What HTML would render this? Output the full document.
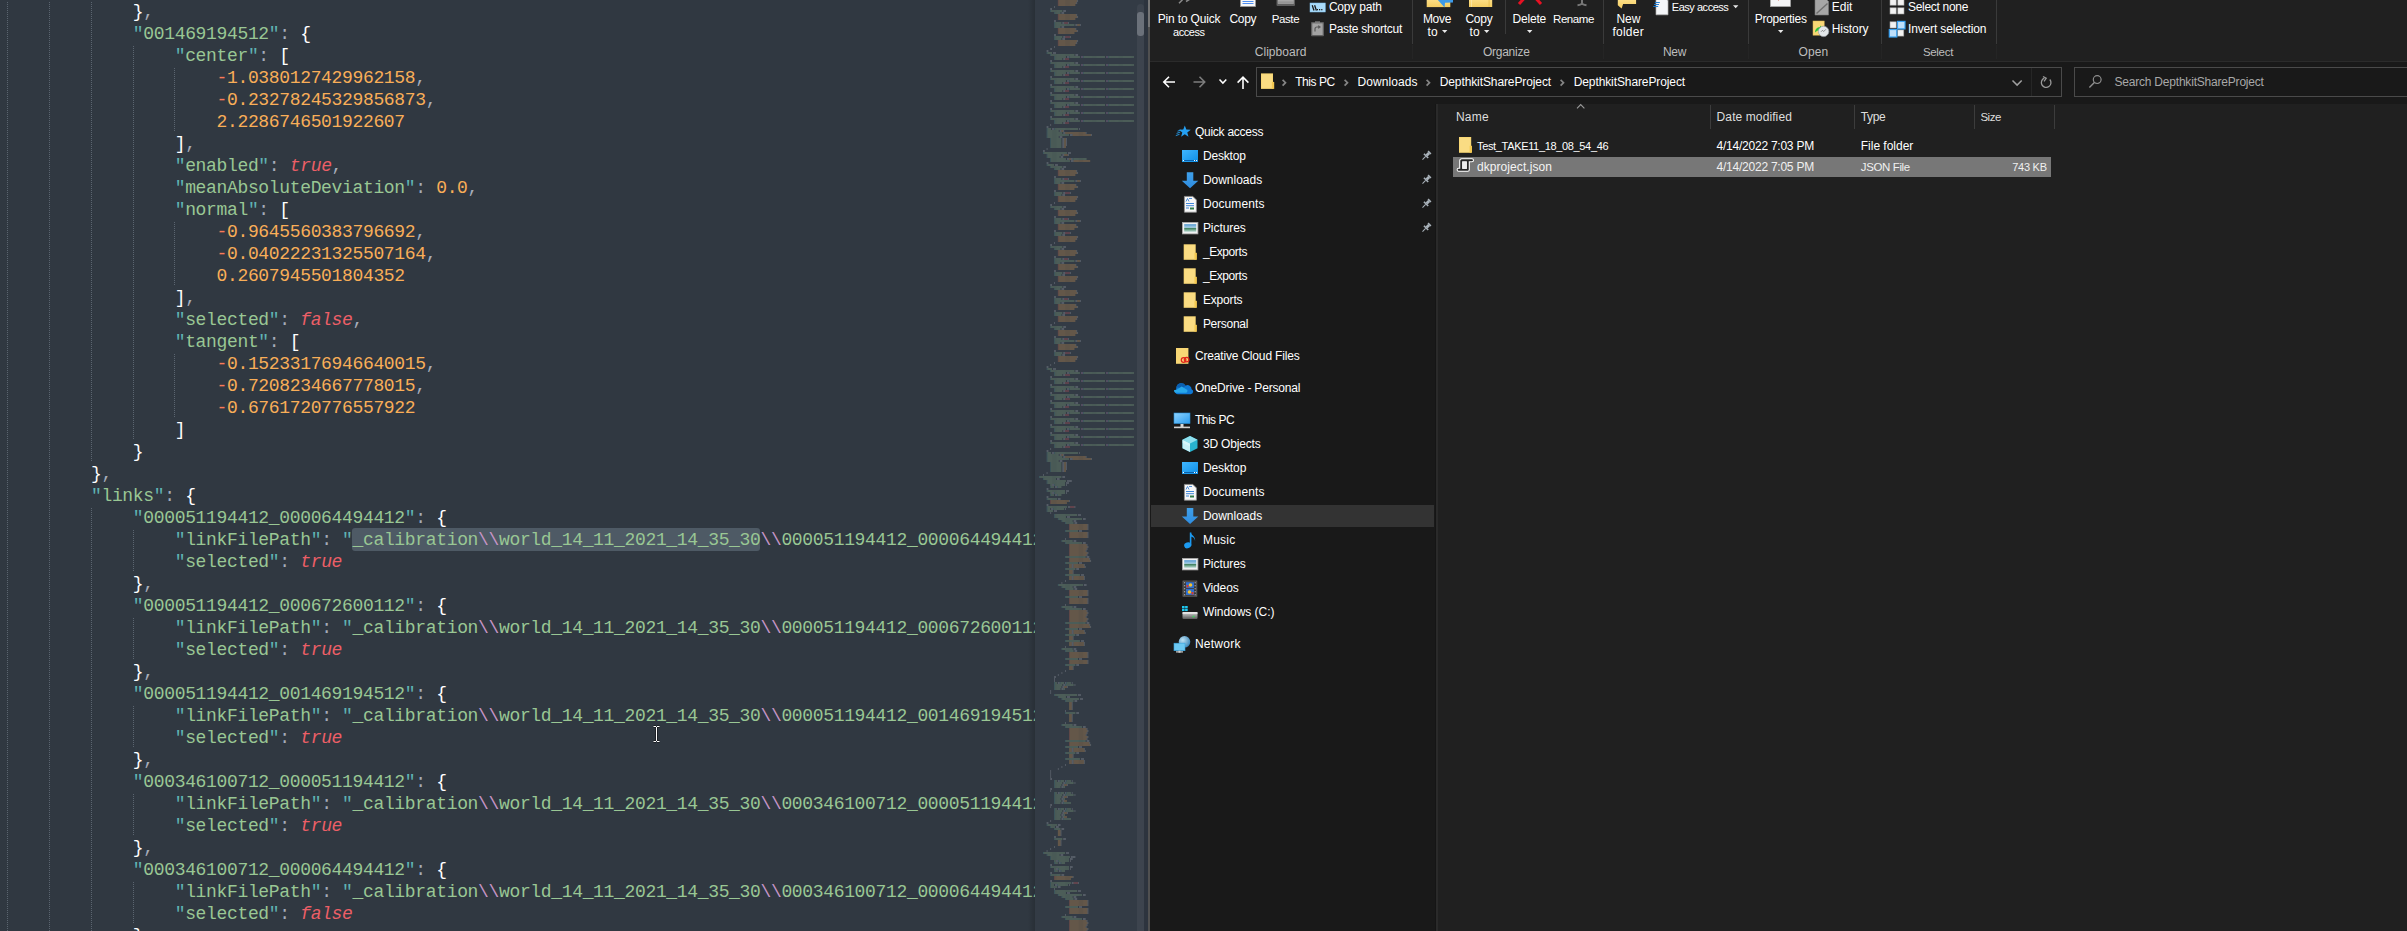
<!DOCTYPE html><html><head><meta charset="utf-8"><style>
*{margin:0;padding:0;box-sizing:border-box}
html,body{width:2407px;height:931px;overflow:hidden;background:#303841}
body{position:relative}
#ed{position:absolute;left:0;top:0;width:1035px;height:931px;background:#303841;overflow:hidden}
#code{position:absolute;left:7.3px;top:1px;font-family:"Liberation Mono",monospace;font-size:18px;letter-spacing:-0.342px;color:#fff}
.ln{position:absolute;left:0;white-space:pre;line-height:22px;height:22px}
.ln i{font-style:normal}
i.q{color:#5fb3b3} i.s{color:#99c794} i.e{color:#c594c5} i.n{color:#f9ae58} i.m{color:#f97b58}
i.c{color:#ec5f67;font-style:italic!important} i.b{color:#ffffff} i.p{color:#a6acb9}
#guides{position:absolute;left:0;top:0}
#guides line{stroke:#5b6570;stroke-width:1;stroke-dasharray:1 1}
#sel{position:absolute;left:352px;top:528px;width:408px;height:23px;background:#4e5a65;border-radius:3px}
#mm{position:absolute;left:1035px;top:0;width:113px;height:931px;background:#333b45}
#sb{position:absolute;left:1137px;top:4px;width:7px;height:927px;background:#3d444e;border-radius:4px 4px 0 0}
#th{position:absolute;left:1137px;top:12px;width:7px;height:24px;background:#6b717a;border-radius:3px}
#div{position:absolute;left:1148px;top:0;width:2px;height:931px;background:linear-gradient(#767676 0,#767676 27px,#505050 27px)}
#mmr{position:absolute;left:1144px;top:0;width:4px;height:931px;background:#2d343e}
#shad{position:absolute;left:1028px;top:0;width:7px;height:931px;background:linear-gradient(90deg,rgba(0,0,0,0),rgba(0,0,0,0.16))}
#ex{position:absolute;left:1150px;top:0;width:1257px;height:931px;background:#191919;overflow:hidden}
.t{position:absolute;white-space:pre;font-family:"Liberation Sans",sans-serif;font-size:12px;line-height:16px;color:#fff}
.abs{position:absolute}
</style></head><body>
<div id="ed">
<div id="sel"></div>
<svg id="guides" width="1035" height="931">
<line x1="7.5" y1="2" x2="7.5" y2="931"/>
<line x1="49.5" y1="2" x2="49.5" y2="931"/>
<line x1="91.5" y1="2" x2="91.5" y2="462"/>
<line x1="91.5" y1="508" x2="91.5" y2="931"/>
<line x1="133.5" y1="46" x2="133.5" y2="440"/>
<line x1="133.5" y1="530" x2="133.5" y2="572"/>
<line x1="133.5" y1="618" x2="133.5" y2="660"/>
<line x1="133.5" y1="706" x2="133.5" y2="748"/>
<line x1="133.5" y1="794" x2="133.5" y2="836"/>
<line x1="133.5" y1="882" x2="133.5" y2="924"/>
<line x1="174.5" y1="68" x2="174.5" y2="132"/>
<line x1="174.5" y1="222" x2="174.5" y2="286"/>
<line x1="174.5" y1="354" x2="174.5" y2="418"/>
</svg>
<div id="code">
<div class="ln" style="top:0px">            <i class="b">}</i><i class="p">,</i></div>
<div class="ln" style="top:22px">            <i class="q">&quot;</i><i class="s">001469194512</i><i class="q">&quot;</i><i class="p">:</i> <i class="b">{</i></div>
<div class="ln" style="top:44px">                <i class="q">&quot;</i><i class="s">center</i><i class="q">&quot;</i><i class="p">:</i> <i class="b">[</i></div>
<div class="ln" style="top:66px">                    <i class="m">-</i><i class="n">1.0380127429962158</i><i class="p">,</i></div>
<div class="ln" style="top:88px">                    <i class="m">-</i><i class="n">0.23278245329856873</i><i class="p">,</i></div>
<div class="ln" style="top:110px">                    <i class="n">2.2286746501922607</i></div>
<div class="ln" style="top:132px">                <i class="b">]</i><i class="p">,</i></div>
<div class="ln" style="top:154px">                <i class="q">&quot;</i><i class="s">enabled</i><i class="q">&quot;</i><i class="p">:</i> <i class="c">true</i><i class="p">,</i></div>
<div class="ln" style="top:176px">                <i class="q">&quot;</i><i class="s">meanAbsoluteDeviation</i><i class="q">&quot;</i><i class="p">:</i> <i class="n">0.0</i><i class="p">,</i></div>
<div class="ln" style="top:198px">                <i class="q">&quot;</i><i class="s">normal</i><i class="q">&quot;</i><i class="p">:</i> <i class="b">[</i></div>
<div class="ln" style="top:220px">                    <i class="m">-</i><i class="n">0.9645560383796692</i><i class="p">,</i></div>
<div class="ln" style="top:242px">                    <i class="m">-</i><i class="n">0.04022231325507164</i><i class="p">,</i></div>
<div class="ln" style="top:264px">                    <i class="n">0.2607945501804352</i></div>
<div class="ln" style="top:286px">                <i class="b">]</i><i class="p">,</i></div>
<div class="ln" style="top:308px">                <i class="q">&quot;</i><i class="s">selected</i><i class="q">&quot;</i><i class="p">:</i> <i class="c">false</i><i class="p">,</i></div>
<div class="ln" style="top:330px">                <i class="q">&quot;</i><i class="s">tangent</i><i class="q">&quot;</i><i class="p">:</i> <i class="b">[</i></div>
<div class="ln" style="top:352px">                    <i class="m">-</i><i class="n">0.15233176946640015</i><i class="p">,</i></div>
<div class="ln" style="top:374px">                    <i class="m">-</i><i class="n">0.7208234667778015</i><i class="p">,</i></div>
<div class="ln" style="top:396px">                    <i class="m">-</i><i class="n">0.6761720776557922</i></div>
<div class="ln" style="top:418px">                <i class="b">]</i></div>
<div class="ln" style="top:440px">            <i class="b">}</i></div>
<div class="ln" style="top:462px">        <i class="b">}</i><i class="p">,</i></div>
<div class="ln" style="top:484px">        <i class="q">&quot;</i><i class="s">links</i><i class="q">&quot;</i><i class="p">:</i> <i class="b">{</i></div>
<div class="ln" style="top:506px">            <i class="q">&quot;</i><i class="s">000051194412_000064494412</i><i class="q">&quot;</i><i class="p">:</i> <i class="b">{</i></div>
<div class="ln" style="top:528px">                <i class="q">&quot;</i><i class="s">linkFilePath</i><i class="q">&quot;</i><i class="p">:</i> <i class="q">&quot;</i><i class="s">_calibration</i><i class="e">\\</i><i class="s">world_14_11_2021_14_35_30</i><i class="e">\\</i><i class="s">000051194412_000064494412.txt</i><i class="q">&quot;</i><i class="p">,</i></div>
<div class="ln" style="top:550px">                <i class="q">&quot;</i><i class="s">selected</i><i class="q">&quot;</i><i class="p">:</i> <i class="c">true</i></div>
<div class="ln" style="top:572px">            <i class="b">}</i><i class="p">,</i></div>
<div class="ln" style="top:594px">            <i class="q">&quot;</i><i class="s">000051194412_000672600112</i><i class="q">&quot;</i><i class="p">:</i> <i class="b">{</i></div>
<div class="ln" style="top:616px">                <i class="q">&quot;</i><i class="s">linkFilePath</i><i class="q">&quot;</i><i class="p">:</i> <i class="q">&quot;</i><i class="s">_calibration</i><i class="e">\\</i><i class="s">world_14_11_2021_14_35_30</i><i class="e">\\</i><i class="s">000051194412_000672600112.txt</i><i class="q">&quot;</i><i class="p">,</i></div>
<div class="ln" style="top:638px">                <i class="q">&quot;</i><i class="s">selected</i><i class="q">&quot;</i><i class="p">:</i> <i class="c">true</i></div>
<div class="ln" style="top:660px">            <i class="b">}</i><i class="p">,</i></div>
<div class="ln" style="top:682px">            <i class="q">&quot;</i><i class="s">000051194412_001469194512</i><i class="q">&quot;</i><i class="p">:</i> <i class="b">{</i></div>
<div class="ln" style="top:704px">                <i class="q">&quot;</i><i class="s">linkFilePath</i><i class="q">&quot;</i><i class="p">:</i> <i class="q">&quot;</i><i class="s">_calibration</i><i class="e">\\</i><i class="s">world_14_11_2021_14_35_30</i><i class="e">\\</i><i class="s">000051194412_001469194512.txt</i><i class="q">&quot;</i><i class="p">,</i></div>
<div class="ln" style="top:726px">                <i class="q">&quot;</i><i class="s">selected</i><i class="q">&quot;</i><i class="p">:</i> <i class="c">true</i></div>
<div class="ln" style="top:748px">            <i class="b">}</i><i class="p">,</i></div>
<div class="ln" style="top:770px">            <i class="q">&quot;</i><i class="s">000346100712_000051194412</i><i class="q">&quot;</i><i class="p">:</i> <i class="b">{</i></div>
<div class="ln" style="top:792px">                <i class="q">&quot;</i><i class="s">linkFilePath</i><i class="q">&quot;</i><i class="p">:</i> <i class="q">&quot;</i><i class="s">_calibration</i><i class="e">\\</i><i class="s">world_14_11_2021_14_35_30</i><i class="e">\\</i><i class="s">000346100712_000051194412.txt</i><i class="q">&quot;</i><i class="p">,</i></div>
<div class="ln" style="top:814px">                <i class="q">&quot;</i><i class="s">selected</i><i class="q">&quot;</i><i class="p">:</i> <i class="c">true</i></div>
<div class="ln" style="top:836px">            <i class="b">}</i><i class="p">,</i></div>
<div class="ln" style="top:858px">            <i class="q">&quot;</i><i class="s">000346100712_000064494412</i><i class="q">&quot;</i><i class="p">:</i> <i class="b">{</i></div>
<div class="ln" style="top:880px">                <i class="q">&quot;</i><i class="s">linkFilePath</i><i class="q">&quot;</i><i class="p">:</i> <i class="q">&quot;</i><i class="s">_calibration</i><i class="e">\\</i><i class="s">world_14_11_2021_14_35_30</i><i class="e">\\</i><i class="s">000346100712_000064494412.txt</i><i class="q">&quot;</i><i class="p">,</i></div>
<div class="ln" style="top:902px">                <i class="q">&quot;</i><i class="s">selected</i><i class="q">&quot;</i><i class="p">:</i> <i class="c">false</i></div>
<div class="ln" style="top:924px">            <i class="b">}</i><i class="p">,</i></div>
</div>
<svg style="position:absolute;left:650px;top:724px" width="14" height="22"><path d="M3.5 2.5h2.5M7 2.5h2.5M6.5 3v14M3.5 17.5h2.5M7 17.5h2.5" stroke="#000" stroke-width="2.4" opacity="0.55"/><path d="M3.5 2.5h2.5M7 2.5h2.5M6.5 3v14M3.5 17.5h2.5M7 17.5h2.5" stroke="#fff" stroke-width="1"/></svg>
<div id="shad"></div>
</div>
<div id="mm"></div>
<svg id="mmsvg" width="2407" height="931" style="position:absolute;left:0;top:0"><g opacity="0.72" stroke-dasharray="0.62 0.31" stroke-width="1.2"><path d="M1057.90 1.0h0.93" stroke="#f97b58"/><path d="M1058.83 1.0h18.60" stroke="#f9ae58"/><path d="M1077.43 1.0h0.93" stroke="#c0c5ce"/><path d="M1057.90 3.0h0.93" stroke="#f97b58"/><path d="M1058.83 3.0h17.67" stroke="#f9ae58"/><path d="M1076.50 3.0h0.93" stroke="#c0c5ce"/><path d="M1057.90 5.0h0.93" stroke="#f97b58"/><path d="M1058.83 5.0h16.74" stroke="#f9ae58"/><path d="M1054.18 7.0h0.93" stroke="#c0c5ce"/><path d="M1050.46 9.0h1.86" stroke="#c0c5ce"/><path d="M1050.46 11.0h0.93" stroke="#5fb3b3"/><path d="M1051.39 11.0h11.16" stroke="#99c794"/><path d="M1063.48 11.0h2.79" stroke="#c0c5ce"/><path d="M1054.18 13.0h0.93" stroke="#5fb3b3"/><path d="M1055.11 13.0h5.58" stroke="#99c794"/><path d="M1061.62 13.0h2.79" stroke="#c0c5ce"/><path d="M1057.90 15.0h0.93" stroke="#f97b58"/><path d="M1058.83 15.0h17.67" stroke="#f9ae58"/><path d="M1076.50 15.0h0.93" stroke="#c0c5ce"/><path d="M1057.90 17.0h0.93" stroke="#f97b58"/><path d="M1058.83 17.0h18.60" stroke="#f9ae58"/><path d="M1077.43 17.0h0.93" stroke="#c0c5ce"/><path d="M1057.90 19.0h0.93" stroke="#f97b58"/><path d="M1058.83 19.0h16.74" stroke="#f9ae58"/><path d="M1054.18 21.0h1.86" stroke="#c0c5ce"/><path d="M1054.18 23.0h0.93" stroke="#5fb3b3"/><path d="M1055.11 23.0h6.51" stroke="#99c794"/><path d="M1062.55 23.0h1.86" stroke="#c0c5ce"/><path d="M1064.41 23.0h3.72" stroke="#ec5f67"/><path d="M1068.13 23.0h0.93" stroke="#c0c5ce"/><path d="M1054.18 25.0h0.93" stroke="#5fb3b3"/><path d="M1055.11 25.0h19.53" stroke="#99c794"/><path d="M1075.57 25.0h1.86" stroke="#c0c5ce"/><path d="M1077.43 25.0h2.79" stroke="#f9ae58"/><path d="M1080.22 25.0h0.93" stroke="#c0c5ce"/><path d="M1054.18 27.0h0.93" stroke="#5fb3b3"/><path d="M1055.11 27.0h5.58" stroke="#99c794"/><path d="M1061.62 27.0h2.79" stroke="#c0c5ce"/><path d="M1057.90 29.0h0.93" stroke="#f97b58"/><path d="M1058.83 29.0h16.74" stroke="#f9ae58"/><path d="M1075.57 29.0h0.93" stroke="#c0c5ce"/><path d="M1057.90 31.0h0.93" stroke="#f97b58"/><path d="M1058.83 31.0h18.60" stroke="#f9ae58"/><path d="M1077.43 31.0h0.93" stroke="#c0c5ce"/><path d="M1057.90 33.0h0.93" stroke="#f97b58"/><path d="M1058.83 33.0h15.81" stroke="#f9ae58"/><path d="M1054.18 35.0h1.86" stroke="#c0c5ce"/><path d="M1054.18 37.0h0.93" stroke="#5fb3b3"/><path d="M1055.11 37.0h7.44" stroke="#99c794"/><path d="M1063.48 37.0h1.86" stroke="#c0c5ce"/><path d="M1065.34 37.0h4.65" stroke="#ec5f67"/><path d="M1069.99 37.0h0.93" stroke="#c0c5ce"/><path d="M1054.18 39.0h0.93" stroke="#5fb3b3"/><path d="M1055.11 39.0h6.51" stroke="#99c794"/><path d="M1062.55 39.0h2.79" stroke="#c0c5ce"/><path d="M1057.90 41.0h0.93" stroke="#f97b58"/><path d="M1058.83 41.0h18.60" stroke="#f9ae58"/><path d="M1077.43 41.0h0.93" stroke="#c0c5ce"/><path d="M1057.90 43.0h0.93" stroke="#f97b58"/><path d="M1058.83 43.0h17.67" stroke="#f9ae58"/><path d="M1076.50 43.0h0.93" stroke="#c0c5ce"/><path d="M1057.90 45.0h0.93" stroke="#f97b58"/><path d="M1058.83 45.0h16.74" stroke="#f9ae58"/><path d="M1054.18 47.0h0.93" stroke="#c0c5ce"/><path d="M1050.46 49.0h1.86" stroke="#c0c5ce"/><path d="M1046.74 51.0h1.86" stroke="#c0c5ce"/><path d="M1046.74 53.0h0.93" stroke="#5fb3b3"/><path d="M1047.67 53.0h4.65" stroke="#99c794"/><path d="M1053.25 53.0h2.79" stroke="#c0c5ce"/><path d="M1050.46 55.0h0.93" stroke="#5fb3b3"/><path d="M1051.39 55.0h23.25" stroke="#99c794"/><path d="M1075.57 55.0h2.79" stroke="#c0c5ce"/><path d="M1054.18 57.0h0.93" stroke="#5fb3b3"/><path d="M1055.11 57.0h11.16" stroke="#99c794"/><path d="M1067.20 57.0h1.86" stroke="#c0c5ce"/><path d="M1069.06 57.0h0.93" stroke="#5fb3b3"/><path d="M1069.99 57.0h10.23" stroke="#99c794"/><path d="M1081.15 57.0h1.86" stroke="#c594c5"/><path d="M1083.01 57.0h0.93" stroke="#5fb3b3"/><path d="M1083.94 57.0h21.39" stroke="#99c794"/><path d="M1106.26 57.0h1.86" stroke="#c594c5"/><path d="M1108.12 57.0h0.93" stroke="#5fb3b3"/><path d="M1109.05 57.0h24.95" stroke="#99c794"/><path d="M1054.18 59.0h0.93" stroke="#5fb3b3"/><path d="M1055.11 59.0h7.44" stroke="#99c794"/><path d="M1063.48 59.0h1.86" stroke="#c0c5ce"/><path d="M1065.34 59.0h3.72" stroke="#ec5f67"/><path d="M1050.46 61.0h1.86" stroke="#c0c5ce"/><path d="M1050.46 63.0h0.93" stroke="#5fb3b3"/><path d="M1051.39 63.0h23.25" stroke="#99c794"/><path d="M1075.57 63.0h2.79" stroke="#c0c5ce"/><path d="M1054.18 65.0h0.93" stroke="#5fb3b3"/><path d="M1055.11 65.0h11.16" stroke="#99c794"/><path d="M1067.20 65.0h1.86" stroke="#c0c5ce"/><path d="M1069.06 65.0h0.93" stroke="#5fb3b3"/><path d="M1069.99 65.0h10.23" stroke="#99c794"/><path d="M1081.15 65.0h1.86" stroke="#c594c5"/><path d="M1083.01 65.0h0.93" stroke="#5fb3b3"/><path d="M1083.94 65.0h21.39" stroke="#99c794"/><path d="M1106.26 65.0h1.86" stroke="#c594c5"/><path d="M1108.12 65.0h0.93" stroke="#5fb3b3"/><path d="M1109.05 65.0h24.95" stroke="#99c794"/><path d="M1054.18 67.0h0.93" stroke="#5fb3b3"/><path d="M1055.11 67.0h7.44" stroke="#99c794"/><path d="M1063.48 67.0h1.86" stroke="#c0c5ce"/><path d="M1065.34 67.0h3.72" stroke="#ec5f67"/><path d="M1050.46 69.0h1.86" stroke="#c0c5ce"/><path d="M1050.46 71.0h0.93" stroke="#5fb3b3"/><path d="M1051.39 71.0h23.25" stroke="#99c794"/><path d="M1075.57 71.0h2.79" stroke="#c0c5ce"/><path d="M1054.18 73.0h0.93" stroke="#5fb3b3"/><path d="M1055.11 73.0h11.16" stroke="#99c794"/><path d="M1067.20 73.0h1.86" stroke="#c0c5ce"/><path d="M1069.06 73.0h0.93" stroke="#5fb3b3"/><path d="M1069.99 73.0h10.23" stroke="#99c794"/><path d="M1081.15 73.0h1.86" stroke="#c594c5"/><path d="M1083.01 73.0h0.93" stroke="#5fb3b3"/><path d="M1083.94 73.0h21.39" stroke="#99c794"/><path d="M1106.26 73.0h1.86" stroke="#c594c5"/><path d="M1108.12 73.0h0.93" stroke="#5fb3b3"/><path d="M1109.05 73.0h24.95" stroke="#99c794"/><path d="M1054.18 75.0h0.93" stroke="#5fb3b3"/><path d="M1055.11 75.0h7.44" stroke="#99c794"/><path d="M1063.48 75.0h1.86" stroke="#c0c5ce"/><path d="M1065.34 75.0h3.72" stroke="#ec5f67"/><path d="M1050.46 77.0h1.86" stroke="#c0c5ce"/><path d="M1050.46 79.0h0.93" stroke="#5fb3b3"/><path d="M1051.39 79.0h23.25" stroke="#99c794"/><path d="M1075.57 79.0h2.79" stroke="#c0c5ce"/><path d="M1054.18 81.0h0.93" stroke="#5fb3b3"/><path d="M1055.11 81.0h11.16" stroke="#99c794"/><path d="M1067.20 81.0h1.86" stroke="#c0c5ce"/><path d="M1069.06 81.0h0.93" stroke="#5fb3b3"/><path d="M1069.99 81.0h10.23" stroke="#99c794"/><path d="M1081.15 81.0h1.86" stroke="#c594c5"/><path d="M1083.01 81.0h0.93" stroke="#5fb3b3"/><path d="M1083.94 81.0h21.39" stroke="#99c794"/><path d="M1106.26 81.0h1.86" stroke="#c594c5"/><path d="M1108.12 81.0h0.93" stroke="#5fb3b3"/><path d="M1109.05 81.0h24.95" stroke="#99c794"/><path d="M1054.18 83.0h0.93" stroke="#5fb3b3"/><path d="M1055.11 83.0h7.44" stroke="#99c794"/><path d="M1063.48 83.0h1.86" stroke="#c0c5ce"/><path d="M1065.34 83.0h3.72" stroke="#ec5f67"/><path d="M1050.46 85.0h1.86" stroke="#c0c5ce"/><path d="M1050.46 87.0h0.93" stroke="#5fb3b3"/><path d="M1051.39 87.0h23.25" stroke="#99c794"/><path d="M1075.57 87.0h2.79" stroke="#c0c5ce"/><path d="M1054.18 89.0h0.93" stroke="#5fb3b3"/><path d="M1055.11 89.0h11.16" stroke="#99c794"/><path d="M1067.20 89.0h1.86" stroke="#c0c5ce"/><path d="M1069.06 89.0h0.93" stroke="#5fb3b3"/><path d="M1069.99 89.0h10.23" stroke="#99c794"/><path d="M1081.15 89.0h1.86" stroke="#c594c5"/><path d="M1083.01 89.0h0.93" stroke="#5fb3b3"/><path d="M1083.94 89.0h21.39" stroke="#99c794"/><path d="M1106.26 89.0h1.86" stroke="#c594c5"/><path d="M1108.12 89.0h0.93" stroke="#5fb3b3"/><path d="M1109.05 89.0h24.95" stroke="#99c794"/><path d="M1054.18 91.0h0.93" stroke="#5fb3b3"/><path d="M1055.11 91.0h7.44" stroke="#99c794"/><path d="M1063.48 91.0h1.86" stroke="#c0c5ce"/><path d="M1065.34 91.0h3.72" stroke="#ec5f67"/><path d="M1050.46 93.0h1.86" stroke="#c0c5ce"/><path d="M1050.46 95.0h0.93" stroke="#5fb3b3"/><path d="M1051.39 95.0h23.25" stroke="#99c794"/><path d="M1075.57 95.0h2.79" stroke="#c0c5ce"/><path d="M1054.18 97.0h0.93" stroke="#5fb3b3"/><path d="M1055.11 97.0h11.16" stroke="#99c794"/><path d="M1067.20 97.0h1.86" stroke="#c0c5ce"/><path d="M1069.06 97.0h0.93" stroke="#5fb3b3"/><path d="M1069.99 97.0h10.23" stroke="#99c794"/><path d="M1081.15 97.0h1.86" stroke="#c594c5"/><path d="M1083.01 97.0h0.93" stroke="#5fb3b3"/><path d="M1083.94 97.0h21.39" stroke="#99c794"/><path d="M1106.26 97.0h1.86" stroke="#c594c5"/><path d="M1108.12 97.0h0.93" stroke="#5fb3b3"/><path d="M1109.05 97.0h24.95" stroke="#99c794"/><path d="M1054.18 99.0h0.93" stroke="#5fb3b3"/><path d="M1055.11 99.0h7.44" stroke="#99c794"/><path d="M1063.48 99.0h1.86" stroke="#c0c5ce"/><path d="M1065.34 99.0h3.72" stroke="#ec5f67"/><path d="M1050.46 101.0h1.86" stroke="#c0c5ce"/><path d="M1050.46 103.0h0.93" stroke="#5fb3b3"/><path d="M1051.39 103.0h23.25" stroke="#99c794"/><path d="M1075.57 103.0h2.79" stroke="#c0c5ce"/><path d="M1054.18 105.0h0.93" stroke="#5fb3b3"/><path d="M1055.11 105.0h11.16" stroke="#99c794"/><path d="M1067.20 105.0h1.86" stroke="#c0c5ce"/><path d="M1069.06 105.0h0.93" stroke="#5fb3b3"/><path d="M1069.99 105.0h10.23" stroke="#99c794"/><path d="M1081.15 105.0h1.86" stroke="#c594c5"/><path d="M1083.01 105.0h0.93" stroke="#5fb3b3"/><path d="M1083.94 105.0h21.39" stroke="#99c794"/><path d="M1106.26 105.0h1.86" stroke="#c594c5"/><path d="M1108.12 105.0h0.93" stroke="#5fb3b3"/><path d="M1109.05 105.0h24.95" stroke="#99c794"/><path d="M1054.18 107.0h0.93" stroke="#5fb3b3"/><path d="M1055.11 107.0h7.44" stroke="#99c794"/><path d="M1063.48 107.0h1.86" stroke="#c0c5ce"/><path d="M1065.34 107.0h3.72" stroke="#ec5f67"/><path d="M1050.46 109.0h1.86" stroke="#c0c5ce"/><path d="M1050.46 111.0h0.93" stroke="#5fb3b3"/><path d="M1051.39 111.0h23.25" stroke="#99c794"/><path d="M1075.57 111.0h2.79" stroke="#c0c5ce"/><path d="M1054.18 113.0h0.93" stroke="#5fb3b3"/><path d="M1055.11 113.0h11.16" stroke="#99c794"/><path d="M1067.20 113.0h1.86" stroke="#c0c5ce"/><path d="M1069.06 113.0h0.93" stroke="#5fb3b3"/><path d="M1069.99 113.0h10.23" stroke="#99c794"/><path d="M1081.15 113.0h1.86" stroke="#c594c5"/><path d="M1083.01 113.0h0.93" stroke="#5fb3b3"/><path d="M1083.94 113.0h21.39" stroke="#99c794"/><path d="M1106.26 113.0h1.86" stroke="#c594c5"/><path d="M1108.12 113.0h0.93" stroke="#5fb3b3"/><path d="M1109.05 113.0h24.95" stroke="#99c794"/><path d="M1054.18 115.0h0.93" stroke="#5fb3b3"/><path d="M1055.11 115.0h7.44" stroke="#99c794"/><path d="M1063.48 115.0h1.86" stroke="#c0c5ce"/><path d="M1065.34 115.0h3.72" stroke="#ec5f67"/><path d="M1050.46 117.0h1.86" stroke="#c0c5ce"/><path d="M1050.46 119.0h0.93" stroke="#5fb3b3"/><path d="M1051.39 119.0h23.25" stroke="#99c794"/><path d="M1075.57 119.0h2.79" stroke="#c0c5ce"/><path d="M1054.18 121.0h0.93" stroke="#5fb3b3"/><path d="M1055.11 121.0h11.16" stroke="#99c794"/><path d="M1067.20 121.0h1.86" stroke="#c0c5ce"/><path d="M1069.06 121.0h0.93" stroke="#5fb3b3"/><path d="M1069.99 121.0h10.23" stroke="#99c794"/><path d="M1081.15 121.0h1.86" stroke="#c594c5"/><path d="M1083.01 121.0h0.93" stroke="#5fb3b3"/><path d="M1083.94 121.0h21.39" stroke="#99c794"/><path d="M1106.26 121.0h1.86" stroke="#c594c5"/><path d="M1108.12 121.0h0.93" stroke="#5fb3b3"/><path d="M1109.05 121.0h24.95" stroke="#99c794"/><path d="M1054.18 123.0h0.93" stroke="#5fb3b3"/><path d="M1055.11 123.0h7.44" stroke="#99c794"/><path d="M1063.48 123.0h1.86" stroke="#c0c5ce"/><path d="M1065.34 123.0h3.72" stroke="#ec5f67"/><path d="M1050.46 125.0h0.93" stroke="#c0c5ce"/><path d="M1046.74 127.0h1.86" stroke="#c0c5ce"/><path d="M1046.74 129.0h0.93" stroke="#5fb3b3"/><path d="M1047.67 129.0h3.72" stroke="#99c794"/><path d="M1052.32 129.0h1.86" stroke="#c0c5ce"/><path d="M1054.18 129.0h0.93" stroke="#5fb3b3"/><path d="M1055.11 129.0h23.25" stroke="#99c794"/><path d="M1079.29 129.0h0.93" stroke="#c0c5ce"/><path d="M1046.74 131.0h0.93" stroke="#5fb3b3"/><path d="M1047.67 131.0h11.16" stroke="#99c794"/><path d="M1059.76 131.0h1.86" stroke="#c0c5ce"/><path d="M1061.62 131.0h1.86" stroke="#f9ae58"/><path d="M1063.48 131.0h0.93" stroke="#c0c5ce"/><path d="M1046.74 133.0h0.93" stroke="#5fb3b3"/><path d="M1047.67 133.0h14.88" stroke="#99c794"/><path d="M1063.48 133.0h1.86" stroke="#c0c5ce"/><path d="M1065.34 133.0h20.46" stroke="#f9ae58"/><path d="M1085.80 133.0h0.93" stroke="#c0c5ce"/><path d="M1046.74 135.0h0.93" stroke="#5fb3b3"/><path d="M1047.67 135.0h21.39" stroke="#99c794"/><path d="M1069.99 135.0h2.79" stroke="#c0c5ce"/><path d="M1072.78 135.0h18.60" stroke="#f9ae58"/><path d="M1091.38 135.0h0.93" stroke="#c0c5ce"/><path d="M1046.74 137.0h0.93" stroke="#5fb3b3"/><path d="M1047.67 137.0h11.16" stroke="#99c794"/><path d="M1059.76 137.0h2.79" stroke="#c0c5ce"/><path d="M1050.46 139.0h0.93" stroke="#5fb3b3"/><path d="M1051.39 139.0h10.23" stroke="#99c794"/><path d="M1062.55 139.0h1.86" stroke="#c0c5ce"/><path d="M1064.41 139.0h1.86" stroke="#f9ae58"/><path d="M1066.27 139.0h0.93" stroke="#c0c5ce"/><path d="M1050.46 141.0h0.93" stroke="#5fb3b3"/><path d="M1051.39 141.0h10.23" stroke="#99c794"/><path d="M1062.55 141.0h1.86" stroke="#c0c5ce"/><path d="M1064.41 141.0h1.86" stroke="#f9ae58"/><path d="M1066.27 141.0h0.93" stroke="#c0c5ce"/><path d="M1050.46 143.0h0.93" stroke="#5fb3b3"/><path d="M1051.39 143.0h10.23" stroke="#99c794"/><path d="M1062.55 143.0h1.86" stroke="#c0c5ce"/><path d="M1064.41 143.0h1.86" stroke="#f9ae58"/><path d="M1066.27 143.0h0.93" stroke="#c0c5ce"/><path d="M1050.46 145.0h0.93" stroke="#5fb3b3"/><path d="M1051.39 145.0h10.23" stroke="#99c794"/><path d="M1062.55 145.0h1.86" stroke="#c0c5ce"/><path d="M1064.41 145.0h1.86" stroke="#f9ae58"/><path d="M1066.27 145.0h0.93" stroke="#c0c5ce"/><path d="M1050.46 147.0h0.93" stroke="#5fb3b3"/><path d="M1051.39 147.0h10.23" stroke="#99c794"/><path d="M1062.55 147.0h1.86" stroke="#c0c5ce"/><path d="M1064.41 147.0h1.86" stroke="#f9ae58"/><path d="M1046.74 149.0h0.93" stroke="#c0c5ce"/><path d="M1043.02 151.0h1.86" stroke="#c0c5ce"/><path d="M1043.02 153.0h0.93" stroke="#5fb3b3"/><path d="M1043.95 153.0h23.25" stroke="#99c794"/><path d="M1068.13 153.0h2.79" stroke="#c0c5ce"/><path d="M1046.74 155.0h0.93" stroke="#5fb3b3"/><path d="M1047.67 155.0h13.95" stroke="#99c794"/><path d="M1062.55 155.0h1.86" stroke="#c0c5ce"/><path d="M1064.41 155.0h3.72" stroke="#f9ae58"/><path d="M1068.13 155.0h0.93" stroke="#c0c5ce"/><path d="M1046.74 157.0h0.93" stroke="#5fb3b3"/><path d="M1047.67 157.0h12.09" stroke="#99c794"/><path d="M1060.69 157.0h2.79" stroke="#c0c5ce"/><path d="M1050.46 159.0h0.93" stroke="#5fb3b3"/><path d="M1051.39 159.0h14.88" stroke="#99c794"/><path d="M1067.20 159.0h1.86" stroke="#c0c5ce"/><path d="M1069.06 159.0h1.86" stroke="#f9ae58"/><path d="M1070.92 159.0h1.86" stroke="#c0c5ce"/><path d="M1072.78 159.0h0.93" stroke="#5fb3b3"/><path d="M1073.71 159.0h13.02" stroke="#99c794"/><path d="M1050.46 161.0h0.93" stroke="#5fb3b3"/><path d="M1051.39 161.0h18.60" stroke="#99c794"/><path d="M1070.92 161.0h2.79" stroke="#c0c5ce"/><path d="M1073.71 161.0h16.74" stroke="#f9ae58"/><path d="M1046.74 163.0h1.86" stroke="#c0c5ce"/><path d="M1046.74 165.0h0.93" stroke="#5fb3b3"/><path d="M1047.67 165.0h6.51" stroke="#99c794"/><path d="M1055.11 165.0h2.79" stroke="#c0c5ce"/><path d="M1050.46 167.0h0.93" stroke="#5fb3b3"/><path d="M1051.39 167.0h11.16" stroke="#99c794"/><path d="M1063.48 167.0h2.79" stroke="#c0c5ce"/><path d="M1054.18 169.0h0.93" stroke="#5fb3b3"/><path d="M1055.11 169.0h5.58" stroke="#99c794"/><path d="M1061.62 169.0h2.79" stroke="#c0c5ce"/><path d="M1057.90 171.0h0.93" stroke="#f97b58"/><path d="M1058.83 171.0h17.67" stroke="#f9ae58"/><path d="M1076.50 171.0h0.93" stroke="#c0c5ce"/><path d="M1057.90 173.0h0.93" stroke="#f97b58"/><path d="M1058.83 173.0h18.60" stroke="#f9ae58"/><path d="M1077.43 173.0h0.93" stroke="#c0c5ce"/><path d="M1057.90 175.0h0.93" stroke="#f97b58"/><path d="M1058.83 175.0h16.74" stroke="#f9ae58"/><path d="M1054.18 177.0h1.86" stroke="#c0c5ce"/><path d="M1054.18 179.0h0.93" stroke="#5fb3b3"/><path d="M1055.11 179.0h6.51" stroke="#99c794"/><path d="M1062.55 179.0h1.86" stroke="#c0c5ce"/><path d="M1064.41 179.0h3.72" stroke="#ec5f67"/><path d="M1068.13 179.0h0.93" stroke="#c0c5ce"/><path d="M1054.18 181.0h0.93" stroke="#5fb3b3"/><path d="M1055.11 181.0h19.53" stroke="#99c794"/><path d="M1075.57 181.0h1.86" stroke="#c0c5ce"/><path d="M1077.43 181.0h2.79" stroke="#f9ae58"/><path d="M1080.22 181.0h0.93" stroke="#c0c5ce"/><path d="M1054.18 183.0h0.93" stroke="#5fb3b3"/><path d="M1055.11 183.0h5.58" stroke="#99c794"/><path d="M1061.62 183.0h2.79" stroke="#c0c5ce"/><path d="M1057.90 185.0h0.93" stroke="#f97b58"/><path d="M1058.83 185.0h16.74" stroke="#f9ae58"/><path d="M1075.57 185.0h0.93" stroke="#c0c5ce"/><path d="M1057.90 187.0h0.93" stroke="#f97b58"/><path d="M1058.83 187.0h18.60" stroke="#f9ae58"/><path d="M1077.43 187.0h0.93" stroke="#c0c5ce"/><path d="M1057.90 189.0h0.93" stroke="#f97b58"/><path d="M1058.83 189.0h15.81" stroke="#f9ae58"/><path d="M1054.18 191.0h1.86" stroke="#c0c5ce"/><path d="M1054.18 193.0h0.93" stroke="#5fb3b3"/><path d="M1055.11 193.0h7.44" stroke="#99c794"/><path d="M1063.48 193.0h1.86" stroke="#c0c5ce"/><path d="M1065.34 193.0h4.65" stroke="#ec5f67"/><path d="M1069.99 193.0h0.93" stroke="#c0c5ce"/><path d="M1054.18 195.0h0.93" stroke="#5fb3b3"/><path d="M1055.11 195.0h6.51" stroke="#99c794"/><path d="M1062.55 195.0h2.79" stroke="#c0c5ce"/><path d="M1057.90 197.0h0.93" stroke="#f97b58"/><path d="M1058.83 197.0h18.60" stroke="#f9ae58"/><path d="M1077.43 197.0h0.93" stroke="#c0c5ce"/><path d="M1057.90 199.0h0.93" stroke="#f97b58"/><path d="M1058.83 199.0h17.67" stroke="#f9ae58"/><path d="M1076.50 199.0h0.93" stroke="#c0c5ce"/><path d="M1057.90 201.0h0.93" stroke="#f97b58"/><path d="M1058.83 201.0h16.74" stroke="#f9ae58"/><path d="M1054.18 203.0h0.93" stroke="#c0c5ce"/><path d="M1050.46 205.0h1.86" stroke="#c0c5ce"/><path d="M1050.46 207.0h0.93" stroke="#5fb3b3"/><path d="M1051.39 207.0h11.16" stroke="#99c794"/><path d="M1063.48 207.0h2.79" stroke="#c0c5ce"/><path d="M1054.18 209.0h0.93" stroke="#5fb3b3"/><path d="M1055.11 209.0h5.58" stroke="#99c794"/><path d="M1061.62 209.0h2.79" stroke="#c0c5ce"/><path d="M1057.90 211.0h0.93" stroke="#f97b58"/><path d="M1058.83 211.0h17.67" stroke="#f9ae58"/><path d="M1076.50 211.0h0.93" stroke="#c0c5ce"/><path d="M1057.90 213.0h0.93" stroke="#f97b58"/><path d="M1058.83 213.0h18.60" stroke="#f9ae58"/><path d="M1077.43 213.0h0.93" stroke="#c0c5ce"/><path d="M1057.90 215.0h0.93" stroke="#f97b58"/><path d="M1058.83 215.0h16.74" stroke="#f9ae58"/><path d="M1054.18 217.0h1.86" stroke="#c0c5ce"/><path d="M1054.18 219.0h0.93" stroke="#5fb3b3"/><path d="M1055.11 219.0h6.51" stroke="#99c794"/><path d="M1062.55 219.0h1.86" stroke="#c0c5ce"/><path d="M1064.41 219.0h3.72" stroke="#ec5f67"/><path d="M1068.13 219.0h0.93" stroke="#c0c5ce"/><path d="M1054.18 221.0h0.93" stroke="#5fb3b3"/><path d="M1055.11 221.0h19.53" stroke="#99c794"/><path d="M1075.57 221.0h1.86" stroke="#c0c5ce"/><path d="M1077.43 221.0h2.79" stroke="#f9ae58"/><path d="M1080.22 221.0h0.93" stroke="#c0c5ce"/><path d="M1054.18 223.0h0.93" stroke="#5fb3b3"/><path d="M1055.11 223.0h5.58" stroke="#99c794"/><path d="M1061.62 223.0h2.79" stroke="#c0c5ce"/><path d="M1057.90 225.0h0.93" stroke="#f97b58"/><path d="M1058.83 225.0h16.74" stroke="#f9ae58"/><path d="M1075.57 225.0h0.93" stroke="#c0c5ce"/><path d="M1057.90 227.0h0.93" stroke="#f97b58"/><path d="M1058.83 227.0h18.60" stroke="#f9ae58"/><path d="M1077.43 227.0h0.93" stroke="#c0c5ce"/><path d="M1057.90 229.0h0.93" stroke="#f97b58"/><path d="M1058.83 229.0h15.81" stroke="#f9ae58"/><path d="M1054.18 231.0h1.86" stroke="#c0c5ce"/><path d="M1054.18 233.0h0.93" stroke="#5fb3b3"/><path d="M1055.11 233.0h7.44" stroke="#99c794"/><path d="M1063.48 233.0h1.86" stroke="#c0c5ce"/><path d="M1065.34 233.0h4.65" stroke="#ec5f67"/><path d="M1069.99 233.0h0.93" stroke="#c0c5ce"/><path d="M1054.18 235.0h0.93" stroke="#5fb3b3"/><path d="M1055.11 235.0h6.51" stroke="#99c794"/><path d="M1062.55 235.0h2.79" stroke="#c0c5ce"/><path d="M1057.90 237.0h0.93" stroke="#f97b58"/><path d="M1058.83 237.0h18.60" stroke="#f9ae58"/><path d="M1077.43 237.0h0.93" stroke="#c0c5ce"/><path d="M1057.90 239.0h0.93" stroke="#f97b58"/><path d="M1058.83 239.0h17.67" stroke="#f9ae58"/><path d="M1076.50 239.0h0.93" stroke="#c0c5ce"/><path d="M1057.90 241.0h0.93" stroke="#f97b58"/><path d="M1058.83 241.0h16.74" stroke="#f9ae58"/><path d="M1054.18 243.0h0.93" stroke="#c0c5ce"/><path d="M1050.46 245.0h1.86" stroke="#c0c5ce"/><path d="M1050.46 247.0h0.93" stroke="#5fb3b3"/><path d="M1051.39 247.0h11.16" stroke="#99c794"/><path d="M1063.48 247.0h2.79" stroke="#c0c5ce"/><path d="M1054.18 249.0h0.93" stroke="#5fb3b3"/><path d="M1055.11 249.0h5.58" stroke="#99c794"/><path d="M1061.62 249.0h2.79" stroke="#c0c5ce"/><path d="M1057.90 251.0h0.93" stroke="#f97b58"/><path d="M1058.83 251.0h17.67" stroke="#f9ae58"/><path d="M1076.50 251.0h0.93" stroke="#c0c5ce"/><path d="M1057.90 253.0h0.93" stroke="#f97b58"/><path d="M1058.83 253.0h18.60" stroke="#f9ae58"/><path d="M1077.43 253.0h0.93" stroke="#c0c5ce"/><path d="M1057.90 255.0h0.93" stroke="#f97b58"/><path d="M1058.83 255.0h16.74" stroke="#f9ae58"/><path d="M1054.18 257.0h1.86" stroke="#c0c5ce"/><path d="M1054.18 259.0h0.93" stroke="#5fb3b3"/><path d="M1055.11 259.0h6.51" stroke="#99c794"/><path d="M1062.55 259.0h1.86" stroke="#c0c5ce"/><path d="M1064.41 259.0h3.72" stroke="#ec5f67"/><path d="M1068.13 259.0h0.93" stroke="#c0c5ce"/><path d="M1054.18 261.0h0.93" stroke="#5fb3b3"/><path d="M1055.11 261.0h19.53" stroke="#99c794"/><path d="M1075.57 261.0h1.86" stroke="#c0c5ce"/><path d="M1077.43 261.0h2.79" stroke="#f9ae58"/><path d="M1080.22 261.0h0.93" stroke="#c0c5ce"/><path d="M1054.18 263.0h0.93" stroke="#5fb3b3"/><path d="M1055.11 263.0h5.58" stroke="#99c794"/><path d="M1061.62 263.0h2.79" stroke="#c0c5ce"/><path d="M1057.90 265.0h0.93" stroke="#f97b58"/><path d="M1058.83 265.0h16.74" stroke="#f9ae58"/><path d="M1075.57 265.0h0.93" stroke="#c0c5ce"/><path d="M1057.90 267.0h0.93" stroke="#f97b58"/><path d="M1058.83 267.0h18.60" stroke="#f9ae58"/><path d="M1077.43 267.0h0.93" stroke="#c0c5ce"/><path d="M1057.90 269.0h0.93" stroke="#f97b58"/><path d="M1058.83 269.0h15.81" stroke="#f9ae58"/><path d="M1054.18 271.0h1.86" stroke="#c0c5ce"/><path d="M1054.18 273.0h0.93" stroke="#5fb3b3"/><path d="M1055.11 273.0h7.44" stroke="#99c794"/><path d="M1063.48 273.0h1.86" stroke="#c0c5ce"/><path d="M1065.34 273.0h4.65" stroke="#ec5f67"/><path d="M1069.99 273.0h0.93" stroke="#c0c5ce"/><path d="M1054.18 275.0h0.93" stroke="#5fb3b3"/><path d="M1055.11 275.0h6.51" stroke="#99c794"/><path d="M1062.55 275.0h2.79" stroke="#c0c5ce"/><path d="M1057.90 277.0h0.93" stroke="#f97b58"/><path d="M1058.83 277.0h18.60" stroke="#f9ae58"/><path d="M1077.43 277.0h0.93" stroke="#c0c5ce"/><path d="M1057.90 279.0h0.93" stroke="#f97b58"/><path d="M1058.83 279.0h17.67" stroke="#f9ae58"/><path d="M1076.50 279.0h0.93" stroke="#c0c5ce"/><path d="M1057.90 281.0h0.93" stroke="#f97b58"/><path d="M1058.83 281.0h16.74" stroke="#f9ae58"/><path d="M1054.18 283.0h0.93" stroke="#c0c5ce"/><path d="M1050.46 285.0h1.86" stroke="#c0c5ce"/><path d="M1050.46 287.0h0.93" stroke="#5fb3b3"/><path d="M1051.39 287.0h11.16" stroke="#99c794"/><path d="M1063.48 287.0h2.79" stroke="#c0c5ce"/><path d="M1054.18 289.0h0.93" stroke="#5fb3b3"/><path d="M1055.11 289.0h5.58" stroke="#99c794"/><path d="M1061.62 289.0h2.79" stroke="#c0c5ce"/><path d="M1057.90 291.0h0.93" stroke="#f97b58"/><path d="M1058.83 291.0h17.67" stroke="#f9ae58"/><path d="M1076.50 291.0h0.93" stroke="#c0c5ce"/><path d="M1057.90 293.0h0.93" stroke="#f97b58"/><path d="M1058.83 293.0h18.60" stroke="#f9ae58"/><path d="M1077.43 293.0h0.93" stroke="#c0c5ce"/><path d="M1057.90 295.0h0.93" stroke="#f97b58"/><path d="M1058.83 295.0h16.74" stroke="#f9ae58"/><path d="M1054.18 297.0h1.86" stroke="#c0c5ce"/><path d="M1054.18 299.0h0.93" stroke="#5fb3b3"/><path d="M1055.11 299.0h6.51" stroke="#99c794"/><path d="M1062.55 299.0h1.86" stroke="#c0c5ce"/><path d="M1064.41 299.0h3.72" stroke="#ec5f67"/><path d="M1068.13 299.0h0.93" stroke="#c0c5ce"/><path d="M1054.18 301.0h0.93" stroke="#5fb3b3"/><path d="M1055.11 301.0h19.53" stroke="#99c794"/><path d="M1075.57 301.0h1.86" stroke="#c0c5ce"/><path d="M1077.43 301.0h2.79" stroke="#f9ae58"/><path d="M1080.22 301.0h0.93" stroke="#c0c5ce"/><path d="M1054.18 303.0h0.93" stroke="#5fb3b3"/><path d="M1055.11 303.0h5.58" stroke="#99c794"/><path d="M1061.62 303.0h2.79" stroke="#c0c5ce"/><path d="M1057.90 305.0h0.93" stroke="#f97b58"/><path d="M1058.83 305.0h16.74" stroke="#f9ae58"/><path d="M1075.57 305.0h0.93" stroke="#c0c5ce"/><path d="M1057.90 307.0h0.93" stroke="#f97b58"/><path d="M1058.83 307.0h18.60" stroke="#f9ae58"/><path d="M1077.43 307.0h0.93" stroke="#c0c5ce"/><path d="M1057.90 309.0h0.93" stroke="#f97b58"/><path d="M1058.83 309.0h15.81" stroke="#f9ae58"/><path d="M1054.18 311.0h1.86" stroke="#c0c5ce"/><path d="M1054.18 313.0h0.93" stroke="#5fb3b3"/><path d="M1055.11 313.0h7.44" stroke="#99c794"/><path d="M1063.48 313.0h1.86" stroke="#c0c5ce"/><path d="M1065.34 313.0h4.65" stroke="#ec5f67"/><path d="M1069.99 313.0h0.93" stroke="#c0c5ce"/><path d="M1054.18 315.0h0.93" stroke="#5fb3b3"/><path d="M1055.11 315.0h6.51" stroke="#99c794"/><path d="M1062.55 315.0h2.79" stroke="#c0c5ce"/><path d="M1057.90 317.0h0.93" stroke="#f97b58"/><path d="M1058.83 317.0h18.60" stroke="#f9ae58"/><path d="M1077.43 317.0h0.93" stroke="#c0c5ce"/><path d="M1057.90 319.0h0.93" stroke="#f97b58"/><path d="M1058.83 319.0h17.67" stroke="#f9ae58"/><path d="M1076.50 319.0h0.93" stroke="#c0c5ce"/><path d="M1057.90 321.0h0.93" stroke="#f97b58"/><path d="M1058.83 321.0h16.74" stroke="#f9ae58"/><path d="M1054.18 323.0h0.93" stroke="#c0c5ce"/><path d="M1050.46 325.0h1.86" stroke="#c0c5ce"/><path d="M1050.46 327.0h0.93" stroke="#5fb3b3"/><path d="M1051.39 327.0h11.16" stroke="#99c794"/><path d="M1063.48 327.0h2.79" stroke="#c0c5ce"/><path d="M1054.18 329.0h0.93" stroke="#5fb3b3"/><path d="M1055.11 329.0h5.58" stroke="#99c794"/><path d="M1061.62 329.0h2.79" stroke="#c0c5ce"/><path d="M1057.90 331.0h0.93" stroke="#f97b58"/><path d="M1058.83 331.0h17.67" stroke="#f9ae58"/><path d="M1076.50 331.0h0.93" stroke="#c0c5ce"/><path d="M1057.90 333.0h0.93" stroke="#f97b58"/><path d="M1058.83 333.0h18.60" stroke="#f9ae58"/><path d="M1077.43 333.0h0.93" stroke="#c0c5ce"/><path d="M1057.90 335.0h0.93" stroke="#f97b58"/><path d="M1058.83 335.0h16.74" stroke="#f9ae58"/><path d="M1054.18 337.0h1.86" stroke="#c0c5ce"/><path d="M1054.18 339.0h0.93" stroke="#5fb3b3"/><path d="M1055.11 339.0h6.51" stroke="#99c794"/><path d="M1062.55 339.0h1.86" stroke="#c0c5ce"/><path d="M1064.41 339.0h3.72" stroke="#ec5f67"/><path d="M1068.13 339.0h0.93" stroke="#c0c5ce"/><path d="M1054.18 341.0h0.93" stroke="#5fb3b3"/><path d="M1055.11 341.0h19.53" stroke="#99c794"/><path d="M1075.57 341.0h1.86" stroke="#c0c5ce"/><path d="M1077.43 341.0h2.79" stroke="#f9ae58"/><path d="M1080.22 341.0h0.93" stroke="#c0c5ce"/><path d="M1054.18 343.0h0.93" stroke="#5fb3b3"/><path d="M1055.11 343.0h5.58" stroke="#99c794"/><path d="M1061.62 343.0h2.79" stroke="#c0c5ce"/><path d="M1057.90 345.0h0.93" stroke="#f97b58"/><path d="M1058.83 345.0h16.74" stroke="#f9ae58"/><path d="M1075.57 345.0h0.93" stroke="#c0c5ce"/><path d="M1057.90 347.0h0.93" stroke="#f97b58"/><path d="M1058.83 347.0h18.60" stroke="#f9ae58"/><path d="M1077.43 347.0h0.93" stroke="#c0c5ce"/><path d="M1057.90 349.0h0.93" stroke="#f97b58"/><path d="M1058.83 349.0h15.81" stroke="#f9ae58"/><path d="M1054.18 351.0h1.86" stroke="#c0c5ce"/><path d="M1054.18 353.0h0.93" stroke="#5fb3b3"/><path d="M1055.11 353.0h7.44" stroke="#99c794"/><path d="M1063.48 353.0h1.86" stroke="#c0c5ce"/><path d="M1065.34 353.0h4.65" stroke="#ec5f67"/><path d="M1069.99 353.0h0.93" stroke="#c0c5ce"/><path d="M1054.18 355.0h0.93" stroke="#5fb3b3"/><path d="M1055.11 355.0h6.51" stroke="#99c794"/><path d="M1062.55 355.0h2.79" stroke="#c0c5ce"/><path d="M1057.90 357.0h0.93" stroke="#f97b58"/><path d="M1058.83 357.0h18.60" stroke="#f9ae58"/><path d="M1077.43 357.0h0.93" stroke="#c0c5ce"/><path d="M1057.90 359.0h0.93" stroke="#f97b58"/><path d="M1058.83 359.0h17.67" stroke="#f9ae58"/><path d="M1076.50 359.0h0.93" stroke="#c0c5ce"/><path d="M1057.90 361.0h0.93" stroke="#f97b58"/><path d="M1058.83 361.0h16.74" stroke="#f9ae58"/><path d="M1054.18 363.0h0.93" stroke="#c0c5ce"/><path d="M1050.46 365.0h0.93" stroke="#c0c5ce"/><path d="M1046.74 367.0h1.86" stroke="#c0c5ce"/><path d="M1046.74 369.0h0.93" stroke="#5fb3b3"/><path d="M1047.67 369.0h4.65" stroke="#99c794"/><path d="M1053.25 369.0h2.79" stroke="#c0c5ce"/><path d="M1050.46 371.0h0.93" stroke="#5fb3b3"/><path d="M1051.39 371.0h23.25" stroke="#99c794"/><path d="M1075.57 371.0h2.79" stroke="#c0c5ce"/><path d="M1054.18 373.0h0.93" stroke="#5fb3b3"/><path d="M1055.11 373.0h11.16" stroke="#99c794"/><path d="M1067.20 373.0h1.86" stroke="#c0c5ce"/><path d="M1069.06 373.0h0.93" stroke="#5fb3b3"/><path d="M1069.99 373.0h10.23" stroke="#99c794"/><path d="M1081.15 373.0h1.86" stroke="#c594c5"/><path d="M1083.01 373.0h0.93" stroke="#5fb3b3"/><path d="M1083.94 373.0h21.39" stroke="#99c794"/><path d="M1106.26 373.0h1.86" stroke="#c594c5"/><path d="M1108.12 373.0h0.93" stroke="#5fb3b3"/><path d="M1109.05 373.0h24.95" stroke="#99c794"/><path d="M1054.18 375.0h0.93" stroke="#5fb3b3"/><path d="M1055.11 375.0h7.44" stroke="#99c794"/><path d="M1063.48 375.0h1.86" stroke="#c0c5ce"/><path d="M1065.34 375.0h4.65" stroke="#ec5f67"/><path d="M1050.46 377.0h1.86" stroke="#c0c5ce"/><path d="M1050.46 379.0h0.93" stroke="#5fb3b3"/><path d="M1051.39 379.0h23.25" stroke="#99c794"/><path d="M1075.57 379.0h2.79" stroke="#c0c5ce"/><path d="M1054.18 381.0h0.93" stroke="#5fb3b3"/><path d="M1055.11 381.0h11.16" stroke="#99c794"/><path d="M1067.20 381.0h1.86" stroke="#c0c5ce"/><path d="M1069.06 381.0h0.93" stroke="#5fb3b3"/><path d="M1069.99 381.0h10.23" stroke="#99c794"/><path d="M1081.15 381.0h1.86" stroke="#c594c5"/><path d="M1083.01 381.0h0.93" stroke="#5fb3b3"/><path d="M1083.94 381.0h21.39" stroke="#99c794"/><path d="M1106.26 381.0h1.86" stroke="#c594c5"/><path d="M1108.12 381.0h0.93" stroke="#5fb3b3"/><path d="M1109.05 381.0h24.95" stroke="#99c794"/><path d="M1054.18 383.0h0.93" stroke="#5fb3b3"/><path d="M1055.11 383.0h7.44" stroke="#99c794"/><path d="M1063.48 383.0h1.86" stroke="#c0c5ce"/><path d="M1065.34 383.0h3.72" stroke="#ec5f67"/><path d="M1050.46 385.0h1.86" stroke="#c0c5ce"/><path d="M1050.46 387.0h0.93" stroke="#5fb3b3"/><path d="M1051.39 387.0h23.25" stroke="#99c794"/><path d="M1075.57 387.0h2.79" stroke="#c0c5ce"/><path d="M1054.18 389.0h0.93" stroke="#5fb3b3"/><path d="M1055.11 389.0h11.16" stroke="#99c794"/><path d="M1067.20 389.0h1.86" stroke="#c0c5ce"/><path d="M1069.06 389.0h0.93" stroke="#5fb3b3"/><path d="M1069.99 389.0h10.23" stroke="#99c794"/><path d="M1081.15 389.0h1.86" stroke="#c594c5"/><path d="M1083.01 389.0h0.93" stroke="#5fb3b3"/><path d="M1083.94 389.0h21.39" stroke="#99c794"/><path d="M1106.26 389.0h1.86" stroke="#c594c5"/><path d="M1108.12 389.0h0.93" stroke="#5fb3b3"/><path d="M1109.05 389.0h24.95" stroke="#99c794"/><path d="M1054.18 391.0h0.93" stroke="#5fb3b3"/><path d="M1055.11 391.0h7.44" stroke="#99c794"/><path d="M1063.48 391.0h1.86" stroke="#c0c5ce"/><path d="M1065.34 391.0h3.72" stroke="#ec5f67"/><path d="M1050.46 393.0h1.86" stroke="#c0c5ce"/><path d="M1050.46 395.0h0.93" stroke="#5fb3b3"/><path d="M1051.39 395.0h23.25" stroke="#99c794"/><path d="M1075.57 395.0h2.79" stroke="#c0c5ce"/><path d="M1054.18 397.0h0.93" stroke="#5fb3b3"/><path d="M1055.11 397.0h11.16" stroke="#99c794"/><path d="M1067.20 397.0h1.86" stroke="#c0c5ce"/><path d="M1069.06 397.0h0.93" stroke="#5fb3b3"/><path d="M1069.99 397.0h10.23" stroke="#99c794"/><path d="M1081.15 397.0h1.86" stroke="#c594c5"/><path d="M1083.01 397.0h0.93" stroke="#5fb3b3"/><path d="M1083.94 397.0h21.39" stroke="#99c794"/><path d="M1106.26 397.0h1.86" stroke="#c594c5"/><path d="M1108.12 397.0h0.93" stroke="#5fb3b3"/><path d="M1109.05 397.0h24.95" stroke="#99c794"/><path d="M1054.18 399.0h0.93" stroke="#5fb3b3"/><path d="M1055.11 399.0h7.44" stroke="#99c794"/><path d="M1063.48 399.0h1.86" stroke="#c0c5ce"/><path d="M1065.34 399.0h4.65" stroke="#ec5f67"/><path d="M1050.46 401.0h1.86" stroke="#c0c5ce"/><path d="M1050.46 403.0h0.93" stroke="#5fb3b3"/><path d="M1051.39 403.0h23.25" stroke="#99c794"/><path d="M1075.57 403.0h2.79" stroke="#c0c5ce"/><path d="M1054.18 405.0h0.93" stroke="#5fb3b3"/><path d="M1055.11 405.0h11.16" stroke="#99c794"/><path d="M1067.20 405.0h1.86" stroke="#c0c5ce"/><path d="M1069.06 405.0h0.93" stroke="#5fb3b3"/><path d="M1069.99 405.0h10.23" stroke="#99c794"/><path d="M1081.15 405.0h1.86" stroke="#c594c5"/><path d="M1083.01 405.0h0.93" stroke="#5fb3b3"/><path d="M1083.94 405.0h21.39" stroke="#99c794"/><path d="M1106.26 405.0h1.86" stroke="#c594c5"/><path d="M1108.12 405.0h0.93" stroke="#5fb3b3"/><path d="M1109.05 405.0h24.95" stroke="#99c794"/><path d="M1054.18 407.0h0.93" stroke="#5fb3b3"/><path d="M1055.11 407.0h7.44" stroke="#99c794"/><path d="M1063.48 407.0h1.86" stroke="#c0c5ce"/><path d="M1065.34 407.0h3.72" stroke="#ec5f67"/><path d="M1050.46 409.0h1.86" stroke="#c0c5ce"/><path d="M1050.46 411.0h0.93" stroke="#5fb3b3"/><path d="M1051.39 411.0h23.25" stroke="#99c794"/><path d="M1075.57 411.0h2.79" stroke="#c0c5ce"/><path d="M1054.18 413.0h0.93" stroke="#5fb3b3"/><path d="M1055.11 413.0h11.16" stroke="#99c794"/><path d="M1067.20 413.0h1.86" stroke="#c0c5ce"/><path d="M1069.06 413.0h0.93" stroke="#5fb3b3"/><path d="M1069.99 413.0h10.23" stroke="#99c794"/><path d="M1081.15 413.0h1.86" stroke="#c594c5"/><path d="M1083.01 413.0h0.93" stroke="#5fb3b3"/><path d="M1083.94 413.0h21.39" stroke="#99c794"/><path d="M1106.26 413.0h1.86" stroke="#c594c5"/><path d="M1108.12 413.0h0.93" stroke="#5fb3b3"/><path d="M1109.05 413.0h24.95" stroke="#99c794"/><path d="M1054.18 415.0h0.93" stroke="#5fb3b3"/><path d="M1055.11 415.0h7.44" stroke="#99c794"/><path d="M1063.48 415.0h1.86" stroke="#c0c5ce"/><path d="M1065.34 415.0h3.72" stroke="#ec5f67"/><path d="M1050.46 417.0h1.86" stroke="#c0c5ce"/><path d="M1050.46 419.0h0.93" stroke="#5fb3b3"/><path d="M1051.39 419.0h23.25" stroke="#99c794"/><path d="M1075.57 419.0h2.79" stroke="#c0c5ce"/><path d="M1054.18 421.0h0.93" stroke="#5fb3b3"/><path d="M1055.11 421.0h11.16" stroke="#99c794"/><path d="M1067.20 421.0h1.86" stroke="#c0c5ce"/><path d="M1069.06 421.0h0.93" stroke="#5fb3b3"/><path d="M1069.99 421.0h10.23" stroke="#99c794"/><path d="M1081.15 421.0h1.86" stroke="#c594c5"/><path d="M1083.01 421.0h0.93" stroke="#5fb3b3"/><path d="M1083.94 421.0h21.39" stroke="#99c794"/><path d="M1106.26 421.0h1.86" stroke="#c594c5"/><path d="M1108.12 421.0h0.93" stroke="#5fb3b3"/><path d="M1109.05 421.0h24.95" stroke="#99c794"/><path d="M1054.18 423.0h0.93" stroke="#5fb3b3"/><path d="M1055.11 423.0h7.44" stroke="#99c794"/><path d="M1063.48 423.0h1.86" stroke="#c0c5ce"/><path d="M1065.34 423.0h4.65" stroke="#ec5f67"/><path d="M1050.46 425.0h1.86" stroke="#c0c5ce"/><path d="M1050.46 427.0h0.93" stroke="#5fb3b3"/><path d="M1051.39 427.0h23.25" stroke="#99c794"/><path d="M1075.57 427.0h2.79" stroke="#c0c5ce"/><path d="M1054.18 429.0h0.93" stroke="#5fb3b3"/><path d="M1055.11 429.0h11.16" stroke="#99c794"/><path d="M1067.20 429.0h1.86" stroke="#c0c5ce"/><path d="M1069.06 429.0h0.93" stroke="#5fb3b3"/><path d="M1069.99 429.0h10.23" stroke="#99c794"/><path d="M1081.15 429.0h1.86" stroke="#c594c5"/><path d="M1083.01 429.0h0.93" stroke="#5fb3b3"/><path d="M1083.94 429.0h21.39" stroke="#99c794"/><path d="M1106.26 429.0h1.86" stroke="#c594c5"/><path d="M1108.12 429.0h0.93" stroke="#5fb3b3"/><path d="M1109.05 429.0h24.95" stroke="#99c794"/><path d="M1054.18 431.0h0.93" stroke="#5fb3b3"/><path d="M1055.11 431.0h7.44" stroke="#99c794"/><path d="M1063.48 431.0h1.86" stroke="#c0c5ce"/><path d="M1065.34 431.0h3.72" stroke="#ec5f67"/><path d="M1050.46 433.0h1.86" stroke="#c0c5ce"/><path d="M1050.46 435.0h0.93" stroke="#5fb3b3"/><path d="M1051.39 435.0h23.25" stroke="#99c794"/><path d="M1075.57 435.0h2.79" stroke="#c0c5ce"/><path d="M1054.18 437.0h0.93" stroke="#5fb3b3"/><path d="M1055.11 437.0h11.16" stroke="#99c794"/><path d="M1067.20 437.0h1.86" stroke="#c0c5ce"/><path d="M1069.06 437.0h0.93" stroke="#5fb3b3"/><path d="M1069.99 437.0h10.23" stroke="#99c794"/><path d="M1081.15 437.0h1.86" stroke="#c594c5"/><path d="M1083.01 437.0h0.93" stroke="#5fb3b3"/><path d="M1083.94 437.0h21.39" stroke="#99c794"/><path d="M1106.26 437.0h1.86" stroke="#c594c5"/><path d="M1108.12 437.0h0.93" stroke="#5fb3b3"/><path d="M1109.05 437.0h24.95" stroke="#99c794"/><path d="M1054.18 439.0h0.93" stroke="#5fb3b3"/><path d="M1055.11 439.0h7.44" stroke="#99c794"/><path d="M1063.48 439.0h1.86" stroke="#c0c5ce"/><path d="M1065.34 439.0h3.72" stroke="#ec5f67"/><path d="M1050.46 441.0h1.86" stroke="#c0c5ce"/><path d="M1050.46 443.0h0.93" stroke="#5fb3b3"/><path d="M1051.39 443.0h23.25" stroke="#99c794"/><path d="M1075.57 443.0h2.79" stroke="#c0c5ce"/><path d="M1054.18 445.0h0.93" stroke="#5fb3b3"/><path d="M1055.11 445.0h11.16" stroke="#99c794"/><path d="M1067.20 445.0h1.86" stroke="#c0c5ce"/><path d="M1069.06 445.0h0.93" stroke="#5fb3b3"/><path d="M1069.99 445.0h10.23" stroke="#99c794"/><path d="M1081.15 445.0h1.86" stroke="#c594c5"/><path d="M1083.01 445.0h0.93" stroke="#5fb3b3"/><path d="M1083.94 445.0h21.39" stroke="#99c794"/><path d="M1106.26 445.0h1.86" stroke="#c594c5"/><path d="M1108.12 445.0h0.93" stroke="#5fb3b3"/><path d="M1109.05 445.0h24.95" stroke="#99c794"/><path d="M1054.18 447.0h0.93" stroke="#5fb3b3"/><path d="M1055.11 447.0h7.44" stroke="#99c794"/><path d="M1063.48 447.0h1.86" stroke="#c0c5ce"/><path d="M1065.34 447.0h4.65" stroke="#ec5f67"/><path d="M1050.46 449.0h0.93" stroke="#c0c5ce"/><path d="M1046.74 451.0h1.86" stroke="#c0c5ce"/><path d="M1046.74 453.0h0.93" stroke="#5fb3b3"/><path d="M1047.67 453.0h3.72" stroke="#99c794"/><path d="M1052.32 453.0h1.86" stroke="#c0c5ce"/><path d="M1054.18 453.0h0.93" stroke="#5fb3b3"/><path d="M1055.11 453.0h23.25" stroke="#99c794"/><path d="M1079.29 453.0h0.93" stroke="#c0c5ce"/><path d="M1046.74 455.0h0.93" stroke="#5fb3b3"/><path d="M1047.67 455.0h11.16" stroke="#99c794"/><path d="M1059.76 455.0h1.86" stroke="#c0c5ce"/><path d="M1061.62 455.0h1.86" stroke="#f9ae58"/><path d="M1063.48 455.0h0.93" stroke="#c0c5ce"/><path d="M1046.74 457.0h0.93" stroke="#5fb3b3"/><path d="M1047.67 457.0h14.88" stroke="#99c794"/><path d="M1063.48 457.0h1.86" stroke="#c0c5ce"/><path d="M1065.34 457.0h20.46" stroke="#f9ae58"/><path d="M1085.80 457.0h0.93" stroke="#c0c5ce"/><path d="M1046.74 459.0h0.93" stroke="#5fb3b3"/><path d="M1047.67 459.0h21.39" stroke="#99c794"/><path d="M1069.99 459.0h2.79" stroke="#c0c5ce"/><path d="M1072.78 459.0h18.60" stroke="#f9ae58"/><path d="M1091.38 459.0h0.93" stroke="#c0c5ce"/><path d="M1046.74 461.0h0.93" stroke="#5fb3b3"/><path d="M1047.67 461.0h11.16" stroke="#99c794"/><path d="M1059.76 461.0h2.79" stroke="#c0c5ce"/><path d="M1050.46 463.0h0.93" stroke="#5fb3b3"/><path d="M1051.39 463.0h10.23" stroke="#99c794"/><path d="M1062.55 463.0h1.86" stroke="#c0c5ce"/><path d="M1064.41 463.0h1.86" stroke="#f9ae58"/><path d="M1066.27 463.0h0.93" stroke="#c0c5ce"/><path d="M1050.46 465.0h0.93" stroke="#5fb3b3"/><path d="M1051.39 465.0h10.23" stroke="#99c794"/><path d="M1062.55 465.0h1.86" stroke="#c0c5ce"/><path d="M1064.41 465.0h1.86" stroke="#f9ae58"/><path d="M1066.27 465.0h0.93" stroke="#c0c5ce"/><path d="M1050.46 467.0h0.93" stroke="#5fb3b3"/><path d="M1051.39 467.0h10.23" stroke="#99c794"/><path d="M1062.55 467.0h1.86" stroke="#c0c5ce"/><path d="M1064.41 467.0h1.86" stroke="#f9ae58"/><path d="M1066.27 467.0h0.93" stroke="#c0c5ce"/><path d="M1050.46 469.0h0.93" stroke="#5fb3b3"/><path d="M1051.39 469.0h10.23" stroke="#99c794"/><path d="M1062.55 469.0h1.86" stroke="#c0c5ce"/><path d="M1064.41 469.0h1.86" stroke="#f9ae58"/><path d="M1066.27 469.0h0.93" stroke="#c0c5ce"/><path d="M1050.46 471.0h0.93" stroke="#5fb3b3"/><path d="M1051.39 471.0h10.23" stroke="#99c794"/><path d="M1062.55 471.0h1.86" stroke="#c0c5ce"/><path d="M1064.41 471.0h1.86" stroke="#f9ae58"/><path d="M1046.74 473.0h0.93" stroke="#c0c5ce"/><path d="M1043.02 475.0h0.93" stroke="#c0c5ce"/><path d="M1039.30 477.0h0.93" stroke="#5fb3b3"/><path d="M1040.23 477.0h21.39" stroke="#99c794"/><path d="M1062.55 477.0h2.79" stroke="#c0c5ce"/><path d="M1043.02 479.0h0.93" stroke="#5fb3b3"/><path d="M1043.95 479.0h12.09" stroke="#99c794"/><path d="M1056.97 479.0h2.79" stroke="#c0c5ce"/><path d="M1046.74 481.0h0.93" stroke="#5fb3b3"/><path d="M1047.67 481.0h18.60" stroke="#99c794"/><path d="M1067.20 481.0h1.86" stroke="#c0c5ce"/><path d="M1069.06 481.0h2.79" stroke="#c0c5ce"/><path d="M1046.74 483.0h0.93" stroke="#5fb3b3"/><path d="M1047.67 483.0h17.67" stroke="#99c794"/><path d="M1066.27 483.0h2.79" stroke="#c0c5ce"/><path d="M1050.46 485.0h1.86" stroke="#99c794"/><path d="M1052.32 485.0h1.86" stroke="#c0c5ce"/><path d="M1054.18 485.0h0.93" stroke="#5fb3b3"/><path d="M1055.11 485.0h10.23" stroke="#99c794"/><path d="M1066.27 485.0h0.93" stroke="#c0c5ce"/><path d="M1050.46 487.0h0.93" stroke="#5fb3b3"/><path d="M1051.39 487.0h2.79" stroke="#99c794"/><path d="M1055.11 487.0h1.86" stroke="#c0c5ce"/><path d="M1056.97 487.0h0.93" stroke="#5fb3b3"/><path d="M1057.90 487.0h3.72" stroke="#99c794"/><path d="M1046.74 489.0h1.86" stroke="#c0c5ce"/><path d="M1046.74 491.0h0.93" stroke="#5fb3b3"/><path d="M1047.67 491.0h17.67" stroke="#99c794"/><path d="M1066.27 491.0h2.79" stroke="#c0c5ce"/><path d="M1050.46 493.0h1.86" stroke="#99c794"/><path d="M1052.32 493.0h1.86" stroke="#c0c5ce"/><path d="M1054.18 493.0h0.93" stroke="#5fb3b3"/><path d="M1055.11 493.0h10.23" stroke="#99c794"/><path d="M1066.27 493.0h0.93" stroke="#c0c5ce"/><path d="M1050.46 495.0h0.93" stroke="#5fb3b3"/><path d="M1051.39 495.0h2.79" stroke="#99c794"/><path d="M1055.11 495.0h1.86" stroke="#c0c5ce"/><path d="M1056.97 495.0h0.93" stroke="#5fb3b3"/><path d="M1057.90 495.0h3.72" stroke="#99c794"/><path d="M1046.74 497.0h1.86" stroke="#c0c5ce"/><path d="M1046.74 499.0h0.93" stroke="#5fb3b3"/><path d="M1047.67 499.0h9.30" stroke="#99c794"/><path d="M1057.90 499.0h2.79" stroke="#c0c5ce"/><path d="M1050.46 501.0h0.93" stroke="#f97b58"/><path d="M1051.39 501.0h17.67" stroke="#f9ae58"/><path d="M1069.06 501.0h0.93" stroke="#c0c5ce"/><path d="M1050.46 503.0h0.93" stroke="#f97b58"/><path d="M1051.39 503.0h15.81" stroke="#f9ae58"/><path d="M1046.74 505.0h1.86" stroke="#c0c5ce"/><path d="M1046.74 507.0h0.93" stroke="#5fb3b3"/><path d="M1047.67 507.0h19.53" stroke="#99c794"/><path d="M1068.13 507.0h1.86" stroke="#c0c5ce"/><path d="M1069.99 507.0h4.65" stroke="#ec5f67"/><path d="M1074.64 507.0h0.93" stroke="#c0c5ce"/><path d="M1046.74 509.0h0.93" stroke="#5fb3b3"/><path d="M1047.67 509.0h2.79" stroke="#99c794"/><path d="M1051.39 509.0h1.86" stroke="#c0c5ce"/><path d="M1053.25 509.0h0.93" stroke="#5fb3b3"/><path d="M1054.18 509.0h10.23" stroke="#99c794"/><path d="M1065.34 509.0h0.93" stroke="#c0c5ce"/><path d="M1046.74 511.0h0.93" stroke="#5fb3b3"/><path d="M1047.67 511.0h5.58" stroke="#99c794"/><path d="M1054.18 511.0h2.79" stroke="#c0c5ce"/><path d="M1050.46 513.0h0.93" stroke="#c0c5ce"/><path d="M1054.18 515.0h0.93" stroke="#5fb3b3"/><path d="M1055.11 515.0h22.32" stroke="#99c794"/><path d="M1078.36 515.0h2.79" stroke="#c0c5ce"/><path d="M1054.18 517.0h0.93" stroke="#5fb3b3"/><path d="M1055.11 517.0h11.16" stroke="#99c794"/><path d="M1067.20 517.0h2.79" stroke="#c0c5ce"/><path d="M1057.90 519.0h0.93" stroke="#5fb3b3"/><path d="M1058.83 519.0h23.25" stroke="#99c794"/><path d="M1083.01 519.0h2.79" stroke="#c0c5ce"/><path d="M1061.62 521.0h0.93" stroke="#5fb3b3"/><path d="M1062.55 521.0h10.23" stroke="#99c794"/><path d="M1073.71 521.0h2.79" stroke="#c0c5ce"/><path d="M1065.34 523.0h0.93" stroke="#5fb3b3"/><path d="M1066.27 523.0h7.44" stroke="#99c794"/><path d="M1074.64 523.0h2.79" stroke="#c0c5ce"/><path d="M1069.06 525.0h0.93" stroke="#f97b58"/><path d="M1069.99 525.0h17.67" stroke="#f9ae58"/><path d="M1087.66 525.0h0.93" stroke="#c0c5ce"/><path d="M1069.06 527.0h0.93" stroke="#f97b58"/><path d="M1069.99 527.0h17.67" stroke="#f9ae58"/><path d="M1087.66 527.0h0.93" stroke="#c0c5ce"/><path d="M1069.06 529.0h0.93" stroke="#f97b58"/><path d="M1069.99 529.0h17.67" stroke="#f9ae58"/><path d="M1087.66 529.0h0.93" stroke="#c0c5ce"/><path d="M1065.34 531.0h0.93" stroke="#5fb3b3"/><path d="M1066.27 531.0h12.09" stroke="#99c794"/><path d="M1079.29 531.0h2.79" stroke="#c0c5ce"/><path d="M1069.06 533.0h0.93" stroke="#f97b58"/><path d="M1069.99 533.0h17.67" stroke="#f9ae58"/><path d="M1087.66 533.0h0.93" stroke="#c0c5ce"/><path d="M1069.06 535.0h0.93" stroke="#f97b58"/><path d="M1069.99 535.0h17.67" stroke="#f9ae58"/><path d="M1087.66 535.0h0.93" stroke="#c0c5ce"/><path d="M1069.06 537.0h0.93" stroke="#f97b58"/><path d="M1069.99 537.0h17.67" stroke="#f9ae58"/><path d="M1087.66 537.0h0.93" stroke="#c0c5ce"/><path d="M1065.34 539.0h0.93" stroke="#c0c5ce"/><path d="M1061.62 541.0h0.93" stroke="#5fb3b3"/><path d="M1062.55 541.0h10.23" stroke="#99c794"/><path d="M1073.71 541.0h2.79" stroke="#c0c5ce"/><path d="M1065.34 543.0h0.93" stroke="#5fb3b3"/><path d="M1066.27 543.0h15.81" stroke="#99c794"/><path d="M1083.01 543.0h2.79" stroke="#c0c5ce"/><path d="M1069.06 545.0h0.93" stroke="#f97b58"/><path d="M1069.99 545.0h16.74" stroke="#f9ae58"/><path d="M1086.73 545.0h0.93" stroke="#c0c5ce"/><path d="M1069.06 547.0h0.93" stroke="#f97b58"/><path d="M1069.99 547.0h17.67" stroke="#f9ae58"/><path d="M1087.66 547.0h0.93" stroke="#c0c5ce"/><path d="M1069.06 549.0h0.93" stroke="#f97b58"/><path d="M1069.99 549.0h16.74" stroke="#f9ae58"/><path d="M1086.73 549.0h0.93" stroke="#c0c5ce"/><path d="M1069.06 551.0h0.93" stroke="#f97b58"/><path d="M1069.99 551.0h15.81" stroke="#f9ae58"/><path d="M1085.80 551.0h0.93" stroke="#c0c5ce"/><path d="M1069.06 553.0h0.93" stroke="#f97b58"/><path d="M1069.99 553.0h17.67" stroke="#f9ae58"/><path d="M1087.66 553.0h0.93" stroke="#c0c5ce"/><path d="M1069.06 555.0h0.93" stroke="#f97b58"/><path d="M1069.99 555.0h16.74" stroke="#f9ae58"/><path d="M1086.73 555.0h0.93" stroke="#c0c5ce"/><path d="M1065.34 557.0h0.93" stroke="#5fb3b3"/><path d="M1066.27 557.0h19.53" stroke="#99c794"/><path d="M1086.73 557.0h2.79" stroke="#c0c5ce"/><path d="M1069.06 559.0h0.93" stroke="#f97b58"/><path d="M1069.99 559.0h19.53" stroke="#f9ae58"/><path d="M1089.52 559.0h0.93" stroke="#c0c5ce"/><path d="M1069.06 561.0h0.93" stroke="#f97b58"/><path d="M1069.99 561.0h20.46" stroke="#f9ae58"/><path d="M1090.45 561.0h0.93" stroke="#c0c5ce"/><path d="M1065.34 563.0h0.93" stroke="#5fb3b3"/><path d="M1066.27 563.0h12.09" stroke="#99c794"/><path d="M1079.29 563.0h2.79" stroke="#c0c5ce"/><path d="M1069.06 565.0h2.79" stroke="#f9ae58"/><path d="M1071.85 565.0h1.86" stroke="#c0c5ce"/><path d="M1073.71 565.0h10.23" stroke="#f9ae58"/><path d="M1083.94 565.0h0.93" stroke="#c0c5ce"/><path d="M1069.06 567.0h2.79" stroke="#f9ae58"/><path d="M1071.85 567.0h1.86" stroke="#c0c5ce"/><path d="M1073.71 567.0h11.16" stroke="#f9ae58"/><path d="M1084.87 567.0h0.93" stroke="#c0c5ce"/><path d="M1065.34 569.0h0.93" stroke="#5fb3b3"/><path d="M1066.27 569.0h9.30" stroke="#99c794"/><path d="M1076.50 569.0h2.79" stroke="#c0c5ce"/><path d="M1069.06 571.0h3.72" stroke="#f9ae58"/><path d="M1072.78 571.0h0.93" stroke="#c0c5ce"/><path d="M1069.06 573.0h3.72" stroke="#f9ae58"/><path d="M1072.78 573.0h0.93" stroke="#c0c5ce"/><path d="M1065.34 575.0h0.93" stroke="#5fb3b3"/><path d="M1066.27 575.0h13.95" stroke="#99c794"/><path d="M1081.15 575.0h2.79" stroke="#c0c5ce"/><path d="M1069.06 577.0h2.79" stroke="#f9ae58"/><path d="M1071.85 577.0h1.86" stroke="#c0c5ce"/><path d="M1073.71 577.0h10.23" stroke="#f9ae58"/><path d="M1083.94 577.0h0.93" stroke="#c0c5ce"/><path d="M1069.06 579.0h2.79" stroke="#f9ae58"/><path d="M1071.85 579.0h1.86" stroke="#c0c5ce"/><path d="M1073.71 579.0h10.23" stroke="#f9ae58"/><path d="M1083.94 579.0h0.93" stroke="#c0c5ce"/><path d="M1065.34 581.0h0.93" stroke="#c0c5ce"/><path d="M1061.62 583.0h0.93" stroke="#c0c5ce"/><path d="M1057.90 585.0h0.93" stroke="#5fb3b3"/><path d="M1058.83 585.0h24.18" stroke="#99c794"/><path d="M1083.94 585.0h2.79" stroke="#c0c5ce"/><path d="M1061.62 587.0h0.93" stroke="#5fb3b3"/><path d="M1062.55 587.0h10.23" stroke="#99c794"/><path d="M1073.71 587.0h2.79" stroke="#c0c5ce"/><path d="M1065.34 589.0h0.93" stroke="#5fb3b3"/><path d="M1066.27 589.0h7.44" stroke="#99c794"/><path d="M1074.64 589.0h2.79" stroke="#c0c5ce"/><path d="M1069.06 591.0h0.93" stroke="#f97b58"/><path d="M1069.99 591.0h17.67" stroke="#f9ae58"/><path d="M1087.66 591.0h0.93" stroke="#c0c5ce"/><path d="M1069.06 593.0h0.93" stroke="#f97b58"/><path d="M1069.99 593.0h17.67" stroke="#f9ae58"/><path d="M1087.66 593.0h0.93" stroke="#c0c5ce"/><path d="M1069.06 595.0h0.93" stroke="#f97b58"/><path d="M1069.99 595.0h17.67" stroke="#f9ae58"/><path d="M1087.66 595.0h0.93" stroke="#c0c5ce"/><path d="M1065.34 597.0h0.93" stroke="#5fb3b3"/><path d="M1066.27 597.0h12.09" stroke="#99c794"/><path d="M1079.29 597.0h2.79" stroke="#c0c5ce"/><path d="M1069.06 599.0h0.93" stroke="#f97b58"/><path d="M1069.99 599.0h17.67" stroke="#f9ae58"/><path d="M1087.66 599.0h0.93" stroke="#c0c5ce"/><path d="M1069.06 601.0h0.93" stroke="#f97b58"/><path d="M1069.99 601.0h17.67" stroke="#f9ae58"/><path d="M1087.66 601.0h0.93" stroke="#c0c5ce"/><path d="M1069.06 603.0h0.93" stroke="#f97b58"/><path d="M1069.99 603.0h17.67" stroke="#f9ae58"/><path d="M1087.66 603.0h0.93" stroke="#c0c5ce"/><path d="M1065.34 605.0h0.93" stroke="#c0c5ce"/><path d="M1061.62 607.0h0.93" stroke="#5fb3b3"/><path d="M1062.55 607.0h10.23" stroke="#99c794"/><path d="M1073.71 607.0h2.79" stroke="#c0c5ce"/><path d="M1065.34 609.0h0.93" stroke="#5fb3b3"/><path d="M1066.27 609.0h15.81" stroke="#99c794"/><path d="M1083.01 609.0h2.79" stroke="#c0c5ce"/><path d="M1069.06 611.0h0.93" stroke="#f97b58"/><path d="M1069.99 611.0h16.74" stroke="#f9ae58"/><path d="M1086.73 611.0h0.93" stroke="#c0c5ce"/><path d="M1069.06 613.0h0.93" stroke="#f97b58"/><path d="M1069.99 613.0h17.67" stroke="#f9ae58"/><path d="M1087.66 613.0h0.93" stroke="#c0c5ce"/><path d="M1069.06 615.0h0.93" stroke="#f97b58"/><path d="M1069.99 615.0h16.74" stroke="#f9ae58"/><path d="M1086.73 615.0h0.93" stroke="#c0c5ce"/><path d="M1069.06 617.0h0.93" stroke="#f97b58"/><path d="M1069.99 617.0h15.81" stroke="#f9ae58"/><path d="M1085.80 617.0h0.93" stroke="#c0c5ce"/><path d="M1069.06 619.0h0.93" stroke="#f97b58"/><path d="M1069.99 619.0h17.67" stroke="#f9ae58"/><path d="M1087.66 619.0h0.93" stroke="#c0c5ce"/><path d="M1069.06 621.0h0.93" stroke="#f97b58"/><path d="M1069.99 621.0h16.74" stroke="#f9ae58"/><path d="M1086.73 621.0h0.93" stroke="#c0c5ce"/><path d="M1065.34 623.0h0.93" stroke="#5fb3b3"/><path d="M1066.27 623.0h19.53" stroke="#99c794"/><path d="M1086.73 623.0h2.79" stroke="#c0c5ce"/><path d="M1069.06 625.0h0.93" stroke="#f97b58"/><path d="M1069.99 625.0h19.53" stroke="#f9ae58"/><path d="M1089.52 625.0h0.93" stroke="#c0c5ce"/><path d="M1069.06 627.0h0.93" stroke="#f97b58"/><path d="M1069.99 627.0h20.46" stroke="#f9ae58"/><path d="M1090.45 627.0h0.93" stroke="#c0c5ce"/><path d="M1065.34 629.0h0.93" stroke="#5fb3b3"/><path d="M1066.27 629.0h12.09" stroke="#99c794"/><path d="M1079.29 629.0h2.79" stroke="#c0c5ce"/><path d="M1069.06 631.0h2.79" stroke="#f9ae58"/><path d="M1071.85 631.0h1.86" stroke="#c0c5ce"/><path d="M1073.71 631.0h10.23" stroke="#f9ae58"/><path d="M1083.94 631.0h0.93" stroke="#c0c5ce"/><path d="M1069.06 633.0h2.79" stroke="#f9ae58"/><path d="M1071.85 633.0h1.86" stroke="#c0c5ce"/><path d="M1073.71 633.0h11.16" stroke="#f9ae58"/><path d="M1084.87 633.0h0.93" stroke="#c0c5ce"/><path d="M1065.34 635.0h0.93" stroke="#5fb3b3"/><path d="M1066.27 635.0h9.30" stroke="#99c794"/><path d="M1076.50 635.0h2.79" stroke="#c0c5ce"/><path d="M1069.06 637.0h3.72" stroke="#f9ae58"/><path d="M1072.78 637.0h0.93" stroke="#c0c5ce"/><path d="M1069.06 639.0h3.72" stroke="#f9ae58"/><path d="M1072.78 639.0h0.93" stroke="#c0c5ce"/><path d="M1065.34 641.0h0.93" stroke="#5fb3b3"/><path d="M1066.27 641.0h13.95" stroke="#99c794"/><path d="M1081.15 641.0h2.79" stroke="#c0c5ce"/><path d="M1069.06 643.0h2.79" stroke="#f9ae58"/><path d="M1071.85 643.0h1.86" stroke="#c0c5ce"/><path d="M1073.71 643.0h10.23" stroke="#f9ae58"/><path d="M1083.94 643.0h0.93" stroke="#c0c5ce"/><path d="M1069.06 645.0h2.79" stroke="#f9ae58"/><path d="M1071.85 645.0h1.86" stroke="#c0c5ce"/><path d="M1073.71 645.0h10.23" stroke="#f9ae58"/><path d="M1083.94 645.0h0.93" stroke="#c0c5ce"/><path d="M1065.34 647.0h0.93" stroke="#c0c5ce"/><path d="M1061.62 649.0h0.93" stroke="#5fb3b3"/><path d="M1062.55 649.0h10.23" stroke="#99c794"/><path d="M1073.71 649.0h2.79" stroke="#c0c5ce"/><path d="M1065.34 651.0h0.93" stroke="#5fb3b3"/><path d="M1066.27 651.0h7.44" stroke="#99c794"/><path d="M1074.64 651.0h2.79" stroke="#c0c5ce"/><path d="M1069.06 653.0h0.93" stroke="#f97b58"/><path d="M1069.99 653.0h17.67" stroke="#f9ae58"/><path d="M1087.66 653.0h0.93" stroke="#c0c5ce"/><path d="M1069.06 655.0h0.93" stroke="#f97b58"/><path d="M1069.99 655.0h17.67" stroke="#f9ae58"/><path d="M1087.66 655.0h0.93" stroke="#c0c5ce"/><path d="M1069.06 657.0h0.93" stroke="#f97b58"/><path d="M1069.99 657.0h17.67" stroke="#f9ae58"/><path d="M1087.66 657.0h0.93" stroke="#c0c5ce"/><path d="M1065.34 659.0h0.93" stroke="#5fb3b3"/><path d="M1066.27 659.0h12.09" stroke="#99c794"/><path d="M1079.29 659.0h2.79" stroke="#c0c5ce"/><path d="M1069.06 661.0h0.93" stroke="#f97b58"/><path d="M1069.99 661.0h17.67" stroke="#f9ae58"/><path d="M1087.66 661.0h0.93" stroke="#c0c5ce"/><path d="M1069.06 663.0h0.93" stroke="#f97b58"/><path d="M1069.99 663.0h17.67" stroke="#f9ae58"/><path d="M1087.66 663.0h0.93" stroke="#c0c5ce"/><path d="M1065.34 665.0h0.93" stroke="#5fb3b3"/><path d="M1066.27 665.0h9.30" stroke="#99c794"/><path d="M1076.50 665.0h2.79" stroke="#c0c5ce"/><path d="M1069.06 667.0h3.72" stroke="#f9ae58"/><path d="M1072.78 667.0h0.93" stroke="#c0c5ce"/><path d="M1069.06 669.0h3.72" stroke="#f9ae58"/><path d="M1072.78 669.0h0.93" stroke="#c0c5ce"/><path d="M1065.34 671.0h0.93" stroke="#c0c5ce"/><path d="M1061.62 673.0h0.93" stroke="#c0c5ce"/><path d="M1057.90 675.0h0.93" stroke="#c0c5ce"/><path d="M1054.18 677.0h1.86" stroke="#c0c5ce"/><path d="M1054.18 679.0h0.93" stroke="#c0c5ce"/><path d="M1054.18 681.0h0.93" stroke="#c0c5ce"/><path d="M1054.18 683.0h0.93" stroke="#5fb3b3"/><path d="M1055.11 683.0h1.86" stroke="#99c794"/><path d="M1057.90 683.0h1.86" stroke="#c0c5ce"/><path d="M1059.76 683.0h0.93" stroke="#5fb3b3"/><path d="M1060.69 683.0h3.72" stroke="#99c794"/><path d="M1065.34 683.0h0.93" stroke="#c0c5ce"/><path d="M1066.27 683.0h0.93" stroke="#5fb3b3"/><path d="M1067.20 683.0h3.72" stroke="#99c794"/><path d="M1071.85 683.0h0.93" stroke="#c0c5ce"/><path d="M1054.18 685.0h0.93" stroke="#5fb3b3"/><path d="M1055.11 685.0h7.44" stroke="#99c794"/><path d="M1063.48 685.0h1.86" stroke="#c0c5ce"/><path d="M1065.34 685.0h0.93" stroke="#5fb3b3"/><path d="M1066.27 685.0h7.44" stroke="#99c794"/><path d="M1074.64 685.0h0.93" stroke="#c0c5ce"/><path d="M1054.18 687.0h0.93" stroke="#5fb3b3"/><path d="M1055.11 687.0h6.51" stroke="#99c794"/><path d="M1062.55 687.0h1.86" stroke="#c0c5ce"/><path d="M1064.41 687.0h2.79" stroke="#f9ae58"/><path d="M1067.20 687.0h0.93" stroke="#c0c5ce"/><path d="M1054.18 689.0h0.93" stroke="#5fb3b3"/><path d="M1055.11 689.0h5.58" stroke="#99c794"/><path d="M1061.62 689.0h1.86" stroke="#c0c5ce"/><path d="M1063.48 689.0h1.86" stroke="#99c794"/><path d="M1050.46 691.0h0.93" stroke="#c0c5ce"/><path d="M1050.46 693.0h0.93" stroke="#c0c5ce"/><path d="M1054.18 695.0h0.93" stroke="#5fb3b3"/><path d="M1055.11 695.0h22.32" stroke="#99c794"/><path d="M1078.36 695.0h2.79" stroke="#c0c5ce"/><path d="M1057.90 697.0h0.93" stroke="#5fb3b3"/><path d="M1058.83 697.0h7.44" stroke="#99c794"/><path d="M1067.20 697.0h2.79" stroke="#c0c5ce"/><path d="M1061.62 699.0h0.93" stroke="#5fb3b3"/><path d="M1062.55 699.0h16.74" stroke="#99c794"/><path d="M1080.22 699.0h2.79" stroke="#c0c5ce"/><path d="M1065.34 701.0h0.93" stroke="#5fb3b3"/><path d="M1066.27 701.0h7.44" stroke="#99c794"/><path d="M1074.64 701.0h2.79" stroke="#c0c5ce"/><path d="M1069.06 703.0h2.79" stroke="#f9ae58"/><path d="M1071.85 703.0h0.93" stroke="#c0c5ce"/><path d="M1069.06 705.0h2.79" stroke="#f9ae58"/><path d="M1071.85 705.0h0.93" stroke="#c0c5ce"/><path d="M1069.06 707.0h2.79" stroke="#f9ae58"/><path d="M1071.85 707.0h0.93" stroke="#c0c5ce"/><path d="M1069.06 709.0h2.79" stroke="#f9ae58"/><path d="M1071.85 709.0h0.93" stroke="#c0c5ce"/><path d="M1065.34 711.0h0.93" stroke="#c0c5ce"/><path d="M1065.34 713.0h0.93" stroke="#5fb3b3"/><path d="M1066.27 713.0h9.30" stroke="#99c794"/><path d="M1076.50 713.0h2.79" stroke="#c0c5ce"/><path d="M1069.06 715.0h2.79" stroke="#f9ae58"/><path d="M1071.85 715.0h0.93" stroke="#c0c5ce"/><path d="M1069.06 717.0h2.79" stroke="#f9ae58"/><path d="M1071.85 717.0h0.93" stroke="#c0c5ce"/><path d="M1069.06 719.0h2.79" stroke="#f9ae58"/><path d="M1071.85 719.0h0.93" stroke="#c0c5ce"/><path d="M1069.06 721.0h2.79" stroke="#f9ae58"/><path d="M1071.85 721.0h0.93" stroke="#c0c5ce"/><path d="M1065.34 723.0h0.93" stroke="#c0c5ce"/><path d="M1061.62 725.0h0.93" stroke="#5fb3b3"/><path d="M1062.55 725.0h10.23" stroke="#99c794"/><path d="M1073.71 725.0h2.79" stroke="#c0c5ce"/><path d="M1065.34 727.0h0.93" stroke="#5fb3b3"/><path d="M1066.27 727.0h15.81" stroke="#99c794"/><path d="M1083.01 727.0h2.79" stroke="#c0c5ce"/><path d="M1069.06 729.0h0.93" stroke="#f97b58"/><path d="M1069.99 729.0h16.74" stroke="#f9ae58"/><path d="M1086.73 729.0h0.93" stroke="#c0c5ce"/><path d="M1069.06 731.0h0.93" stroke="#f97b58"/><path d="M1069.99 731.0h17.67" stroke="#f9ae58"/><path d="M1087.66 731.0h0.93" stroke="#c0c5ce"/><path d="M1069.06 733.0h0.93" stroke="#f97b58"/><path d="M1069.99 733.0h16.74" stroke="#f9ae58"/><path d="M1086.73 733.0h0.93" stroke="#c0c5ce"/><path d="M1069.06 735.0h0.93" stroke="#f97b58"/><path d="M1069.99 735.0h15.81" stroke="#f9ae58"/><path d="M1085.80 735.0h0.93" stroke="#c0c5ce"/><path d="M1069.06 737.0h0.93" stroke="#f97b58"/><path d="M1069.99 737.0h17.67" stroke="#f9ae58"/><path d="M1087.66 737.0h0.93" stroke="#c0c5ce"/><path d="M1069.06 739.0h0.93" stroke="#f97b58"/><path d="M1069.99 739.0h16.74" stroke="#f9ae58"/><path d="M1086.73 739.0h0.93" stroke="#c0c5ce"/><path d="M1065.34 741.0h0.93" stroke="#5fb3b3"/><path d="M1066.27 741.0h19.53" stroke="#99c794"/><path d="M1086.73 741.0h2.79" stroke="#c0c5ce"/><path d="M1069.06 743.0h0.93" stroke="#f97b58"/><path d="M1069.99 743.0h19.53" stroke="#f9ae58"/><path d="M1089.52 743.0h0.93" stroke="#c0c5ce"/><path d="M1069.06 745.0h0.93" stroke="#f97b58"/><path d="M1069.99 745.0h20.46" stroke="#f9ae58"/><path d="M1090.45 745.0h0.93" stroke="#c0c5ce"/><path d="M1065.34 747.0h0.93" stroke="#5fb3b3"/><path d="M1066.27 747.0h12.09" stroke="#99c794"/><path d="M1079.29 747.0h2.79" stroke="#c0c5ce"/><path d="M1069.06 749.0h2.79" stroke="#f9ae58"/><path d="M1071.85 749.0h1.86" stroke="#c0c5ce"/><path d="M1073.71 749.0h10.23" stroke="#f9ae58"/><path d="M1083.94 749.0h0.93" stroke="#c0c5ce"/><path d="M1069.06 751.0h2.79" stroke="#f9ae58"/><path d="M1071.85 751.0h1.86" stroke="#c0c5ce"/><path d="M1073.71 751.0h11.16" stroke="#f9ae58"/><path d="M1084.87 751.0h0.93" stroke="#c0c5ce"/><path d="M1065.34 753.0h0.93" stroke="#5fb3b3"/><path d="M1066.27 753.0h9.30" stroke="#99c794"/><path d="M1076.50 753.0h2.79" stroke="#c0c5ce"/><path d="M1069.06 755.0h3.72" stroke="#f9ae58"/><path d="M1072.78 755.0h0.93" stroke="#c0c5ce"/><path d="M1069.06 757.0h3.72" stroke="#f9ae58"/><path d="M1072.78 757.0h0.93" stroke="#c0c5ce"/><path d="M1065.34 759.0h0.93" stroke="#5fb3b3"/><path d="M1066.27 759.0h13.95" stroke="#99c794"/><path d="M1081.15 759.0h2.79" stroke="#c0c5ce"/><path d="M1069.06 761.0h2.79" stroke="#f9ae58"/><path d="M1071.85 761.0h1.86" stroke="#c0c5ce"/><path d="M1073.71 761.0h10.23" stroke="#f9ae58"/><path d="M1083.94 761.0h0.93" stroke="#c0c5ce"/><path d="M1069.06 763.0h2.79" stroke="#f9ae58"/><path d="M1071.85 763.0h1.86" stroke="#c0c5ce"/><path d="M1073.71 763.0h10.23" stroke="#f9ae58"/><path d="M1083.94 763.0h0.93" stroke="#c0c5ce"/><path d="M1065.34 765.0h0.93" stroke="#c0c5ce"/><path d="M1061.62 767.0h0.93" stroke="#c0c5ce"/><path d="M1057.90 769.0h0.93" stroke="#c0c5ce"/><path d="M1050.46 771.0h0.93" stroke="#c0c5ce"/><path d="M1050.46 773.0h0.93" stroke="#c0c5ce"/><path d="M1050.46 775.0h0.93" stroke="#c0c5ce"/><path d="M1050.46 777.0h0.93" stroke="#c0c5ce"/><path d="M1050.46 779.0h1.86" stroke="#c0c5ce"/><path d="M1054.18 781.0h0.93" stroke="#5fb3b3"/><path d="M1055.11 781.0h1.86" stroke="#99c794"/><path d="M1057.90 781.0h1.86" stroke="#c0c5ce"/><path d="M1059.76 781.0h0.93" stroke="#5fb3b3"/><path d="M1060.69 781.0h3.72" stroke="#99c794"/><path d="M1065.34 781.0h0.93" stroke="#c0c5ce"/><path d="M1066.27 781.0h0.93" stroke="#5fb3b3"/><path d="M1067.20 781.0h3.72" stroke="#99c794"/><path d="M1071.85 781.0h0.93" stroke="#c0c5ce"/><path d="M1054.18 783.0h0.93" stroke="#5fb3b3"/><path d="M1055.11 783.0h7.44" stroke="#99c794"/><path d="M1063.48 783.0h1.86" stroke="#c0c5ce"/><path d="M1065.34 783.0h0.93" stroke="#5fb3b3"/><path d="M1066.27 783.0h7.44" stroke="#99c794"/><path d="M1074.64 783.0h0.93" stroke="#c0c5ce"/><path d="M1054.18 785.0h0.93" stroke="#5fb3b3"/><path d="M1055.11 785.0h6.51" stroke="#99c794"/><path d="M1062.55 785.0h1.86" stroke="#c0c5ce"/><path d="M1064.41 785.0h2.79" stroke="#f9ae58"/><path d="M1067.20 785.0h0.93" stroke="#c0c5ce"/><path d="M1054.18 787.0h0.93" stroke="#5fb3b3"/><path d="M1055.11 787.0h5.58" stroke="#99c794"/><path d="M1061.62 787.0h1.86" stroke="#c0c5ce"/><path d="M1063.48 787.0h1.86" stroke="#99c794"/><path d="M1050.46 789.0h1.86" stroke="#c0c5ce"/><path d="M1050.46 791.0h0.93" stroke="#c0c5ce"/><path d="M1054.18 793.0h0.93" stroke="#5fb3b3"/><path d="M1055.11 793.0h1.86" stroke="#99c794"/><path d="M1057.90 793.0h1.86" stroke="#c0c5ce"/><path d="M1059.76 793.0h0.93" stroke="#5fb3b3"/><path d="M1060.69 793.0h3.72" stroke="#99c794"/><path d="M1065.34 793.0h0.93" stroke="#c0c5ce"/><path d="M1066.27 793.0h0.93" stroke="#5fb3b3"/><path d="M1067.20 793.0h3.72" stroke="#99c794"/><path d="M1071.85 793.0h0.93" stroke="#c0c5ce"/><path d="M1054.18 795.0h0.93" stroke="#5fb3b3"/><path d="M1055.11 795.0h7.44" stroke="#99c794"/><path d="M1063.48 795.0h1.86" stroke="#c0c5ce"/><path d="M1065.34 795.0h0.93" stroke="#5fb3b3"/><path d="M1066.27 795.0h7.44" stroke="#99c794"/><path d="M1074.64 795.0h0.93" stroke="#c0c5ce"/><path d="M1054.18 797.0h0.93" stroke="#5fb3b3"/><path d="M1055.11 797.0h6.51" stroke="#99c794"/><path d="M1062.55 797.0h1.86" stroke="#c0c5ce"/><path d="M1064.41 797.0h2.79" stroke="#f9ae58"/><path d="M1067.20 797.0h0.93" stroke="#c0c5ce"/><path d="M1054.18 799.0h0.93" stroke="#5fb3b3"/><path d="M1055.11 799.0h5.58" stroke="#99c794"/><path d="M1061.62 799.0h1.86" stroke="#c0c5ce"/><path d="M1063.48 799.0h1.86" stroke="#99c794"/><path d="M1054.18 801.0h0.93" stroke="#5fb3b3"/><path d="M1055.11 801.0h6.51" stroke="#99c794"/><path d="M1062.55 801.0h1.86" stroke="#c0c5ce"/><path d="M1064.41 801.0h2.79" stroke="#f9ae58"/><path d="M1054.18 803.0h0.93" stroke="#5fb3b3"/><path d="M1055.11 803.0h5.58" stroke="#99c794"/><path d="M1061.62 803.0h1.86" stroke="#c0c5ce"/><path d="M1063.48 803.0h0.93" stroke="#5fb3b3"/><path d="M1064.41 803.0h6.51" stroke="#99c794"/><path d="M1050.46 805.0h1.86" stroke="#c0c5ce"/><path d="M1050.46 807.0h0.93" stroke="#c0c5ce"/><path d="M1054.18 809.0h0.93" stroke="#5fb3b3"/><path d="M1055.11 809.0h1.86" stroke="#99c794"/><path d="M1057.90 809.0h1.86" stroke="#c0c5ce"/><path d="M1059.76 809.0h0.93" stroke="#5fb3b3"/><path d="M1060.69 809.0h3.72" stroke="#99c794"/><path d="M1065.34 809.0h0.93" stroke="#c0c5ce"/><path d="M1066.27 809.0h0.93" stroke="#5fb3b3"/><path d="M1067.20 809.0h3.72" stroke="#99c794"/><path d="M1071.85 809.0h0.93" stroke="#c0c5ce"/><path d="M1054.18 811.0h0.93" stroke="#5fb3b3"/><path d="M1055.11 811.0h7.44" stroke="#99c794"/><path d="M1063.48 811.0h1.86" stroke="#c0c5ce"/><path d="M1065.34 811.0h0.93" stroke="#5fb3b3"/><path d="M1066.27 811.0h7.44" stroke="#99c794"/><path d="M1074.64 811.0h0.93" stroke="#c0c5ce"/><path d="M1054.18 813.0h0.93" stroke="#5fb3b3"/><path d="M1055.11 813.0h6.51" stroke="#99c794"/><path d="M1062.55 813.0h1.86" stroke="#c0c5ce"/><path d="M1064.41 813.0h2.79" stroke="#f9ae58"/><path d="M1067.20 813.0h0.93" stroke="#c0c5ce"/><path d="M1054.18 815.0h0.93" stroke="#5fb3b3"/><path d="M1055.11 815.0h5.58" stroke="#99c794"/><path d="M1061.62 815.0h1.86" stroke="#c0c5ce"/><path d="M1063.48 815.0h1.86" stroke="#99c794"/><path d="M1054.18 817.0h0.93" stroke="#5fb3b3"/><path d="M1055.11 817.0h6.51" stroke="#99c794"/><path d="M1062.55 817.0h1.86" stroke="#c0c5ce"/><path d="M1064.41 817.0h2.79" stroke="#f9ae58"/><path d="M1054.18 819.0h0.93" stroke="#5fb3b3"/><path d="M1055.11 819.0h5.58" stroke="#99c794"/><path d="M1061.62 819.0h1.86" stroke="#c0c5ce"/><path d="M1063.48 819.0h0.93" stroke="#5fb3b3"/><path d="M1064.41 819.0h6.51" stroke="#99c794"/><path d="M1050.46 821.0h0.93" stroke="#c0c5ce"/><path d="M1046.74 823.0h1.86" stroke="#c0c5ce"/><path d="M1046.74 825.0h0.93" stroke="#5fb3b3"/><path d="M1047.67 825.0h9.30" stroke="#99c794"/><path d="M1057.90 825.0h2.79" stroke="#c0c5ce"/><path d="M1050.46 827.0h0.93" stroke="#5fb3b3"/><path d="M1051.39 827.0h3.72" stroke="#99c794"/><path d="M1056.04 827.0h2.79" stroke="#c0c5ce"/><path d="M1054.18 829.0h0.93" stroke="#5fb3b3"/><path d="M1055.11 829.0h5.58" stroke="#99c794"/><path d="M1061.62 829.0h2.79" stroke="#c0c5ce"/><path d="M1057.90 831.0h2.79" stroke="#f9ae58"/><path d="M1060.69 831.0h0.93" stroke="#c0c5ce"/><path d="M1057.90 833.0h2.79" stroke="#f9ae58"/><path d="M1060.69 833.0h0.93" stroke="#c0c5ce"/><path d="M1057.90 835.0h2.79" stroke="#f9ae58"/><path d="M1060.69 835.0h0.93" stroke="#c0c5ce"/><path d="M1054.18 837.0h1.86" stroke="#c0c5ce"/><path d="M1054.18 839.0h0.93" stroke="#5fb3b3"/><path d="M1055.11 839.0h7.44" stroke="#99c794"/><path d="M1063.48 839.0h2.79" stroke="#c0c5ce"/><path d="M1057.90 841.0h2.79" stroke="#f9ae58"/><path d="M1060.69 841.0h0.93" stroke="#c0c5ce"/><path d="M1057.90 843.0h2.79" stroke="#f9ae58"/><path d="M1060.69 843.0h0.93" stroke="#c0c5ce"/><path d="M1057.90 845.0h2.79" stroke="#f9ae58"/><path d="M1060.69 845.0h0.93" stroke="#c0c5ce"/><path d="M1054.18 847.0h0.93" stroke="#c0c5ce"/><path d="M1050.46 849.0h0.93" stroke="#c0c5ce"/><path d="M1046.74 851.0h0.93" stroke="#c0c5ce"/><path d="M1043.02 853.0h0.93" stroke="#5fb3b3"/><path d="M1043.95 853.0h21.39" stroke="#99c794"/><path d="M1066.27 853.0h2.79" stroke="#c0c5ce"/><path d="M1046.74 855.0h0.93" stroke="#5fb3b3"/><path d="M1047.67 855.0h12.09" stroke="#99c794"/><path d="M1060.69 855.0h2.79" stroke="#c0c5ce"/><path d="M1050.46 857.0h0.93" stroke="#5fb3b3"/><path d="M1051.39 857.0h18.60" stroke="#99c794"/><path d="M1070.92 857.0h1.86" stroke="#c0c5ce"/><path d="M1072.78 857.0h2.79" stroke="#c0c5ce"/><path d="M1050.46 859.0h0.93" stroke="#5fb3b3"/><path d="M1051.39 859.0h17.67" stroke="#99c794"/><path d="M1069.99 859.0h2.79" stroke="#c0c5ce"/><path d="M1054.18 861.0h1.86" stroke="#99c794"/><path d="M1056.04 861.0h1.86" stroke="#c0c5ce"/><path d="M1057.90 861.0h0.93" stroke="#5fb3b3"/><path d="M1058.83 861.0h10.23" stroke="#99c794"/><path d="M1069.99 861.0h0.93" stroke="#c0c5ce"/><path d="M1054.18 863.0h0.93" stroke="#5fb3b3"/><path d="M1055.11 863.0h2.79" stroke="#99c794"/><path d="M1058.83 863.0h1.86" stroke="#c0c5ce"/><path d="M1060.69 863.0h0.93" stroke="#5fb3b3"/><path d="M1061.62 863.0h3.72" stroke="#99c794"/><path d="M1050.46 865.0h1.86" stroke="#c0c5ce"/><path d="M1050.46 867.0h0.93" stroke="#5fb3b3"/><path d="M1051.39 867.0h17.67" stroke="#99c794"/><path d="M1069.99 867.0h2.79" stroke="#c0c5ce"/><path d="M1054.18 869.0h1.86" stroke="#99c794"/><path d="M1056.04 869.0h1.86" stroke="#c0c5ce"/><path d="M1057.90 869.0h0.93" stroke="#5fb3b3"/><path d="M1058.83 869.0h10.23" stroke="#99c794"/><path d="M1069.99 869.0h0.93" stroke="#c0c5ce"/><path d="M1054.18 871.0h0.93" stroke="#5fb3b3"/><path d="M1055.11 871.0h2.79" stroke="#99c794"/><path d="M1058.83 871.0h1.86" stroke="#c0c5ce"/><path d="M1060.69 871.0h0.93" stroke="#5fb3b3"/><path d="M1061.62 871.0h3.72" stroke="#99c794"/><path d="M1050.46 873.0h1.86" stroke="#c0c5ce"/><path d="M1050.46 875.0h0.93" stroke="#5fb3b3"/><path d="M1051.39 875.0h9.30" stroke="#99c794"/><path d="M1061.62 875.0h2.79" stroke="#c0c5ce"/><path d="M1054.18 877.0h0.93" stroke="#f97b58"/><path d="M1055.11 877.0h17.67" stroke="#f9ae58"/><path d="M1072.78 877.0h0.93" stroke="#c0c5ce"/><path d="M1054.18 879.0h0.93" stroke="#f97b58"/><path d="M1055.11 879.0h15.81" stroke="#f9ae58"/><path d="M1050.46 881.0h1.86" stroke="#c0c5ce"/><path d="M1050.46 883.0h0.93" stroke="#5fb3b3"/><path d="M1051.39 883.0h19.53" stroke="#99c794"/><path d="M1071.85 883.0h1.86" stroke="#c0c5ce"/><path d="M1073.71 883.0h4.65" stroke="#ec5f67"/><path d="M1078.36 883.0h0.93" stroke="#c0c5ce"/><path d="M1050.46 885.0h0.93" stroke="#5fb3b3"/><path d="M1051.39 885.0h2.79" stroke="#99c794"/><path d="M1055.11 885.0h1.86" stroke="#c0c5ce"/><path d="M1056.97 885.0h0.93" stroke="#5fb3b3"/><path d="M1057.90 885.0h10.23" stroke="#99c794"/><path d="M1069.06 885.0h0.93" stroke="#c0c5ce"/><path d="M1050.46 887.0h0.93" stroke="#5fb3b3"/><path d="M1051.39 887.0h5.58" stroke="#99c794"/><path d="M1057.90 887.0h2.79" stroke="#c0c5ce"/><path d="M1054.18 889.0h0.93" stroke="#c0c5ce"/><path d="M1054.18 891.0h0.93" stroke="#5fb3b3"/><path d="M1055.11 891.0h22.32" stroke="#99c794"/><path d="M1078.36 891.0h2.79" stroke="#c0c5ce"/><path d="M1054.18 893.0h0.93" stroke="#5fb3b3"/><path d="M1055.11 893.0h11.16" stroke="#99c794"/><path d="M1067.20 893.0h2.79" stroke="#c0c5ce"/><path d="M1057.90 895.0h0.93" stroke="#5fb3b3"/><path d="M1058.83 895.0h23.25" stroke="#99c794"/><path d="M1083.01 895.0h2.79" stroke="#c0c5ce"/><path d="M1061.62 897.0h0.93" stroke="#5fb3b3"/><path d="M1062.55 897.0h10.23" stroke="#99c794"/><path d="M1073.71 897.0h2.79" stroke="#c0c5ce"/><path d="M1065.34 899.0h0.93" stroke="#5fb3b3"/><path d="M1066.27 899.0h7.44" stroke="#99c794"/><path d="M1074.64 899.0h2.79" stroke="#c0c5ce"/><path d="M1069.06 901.0h0.93" stroke="#f97b58"/><path d="M1069.99 901.0h17.67" stroke="#f9ae58"/><path d="M1087.66 901.0h0.93" stroke="#c0c5ce"/><path d="M1069.06 903.0h0.93" stroke="#f97b58"/><path d="M1069.99 903.0h17.67" stroke="#f9ae58"/><path d="M1087.66 903.0h0.93" stroke="#c0c5ce"/><path d="M1069.06 905.0h0.93" stroke="#f97b58"/><path d="M1069.99 905.0h17.67" stroke="#f9ae58"/><path d="M1087.66 905.0h0.93" stroke="#c0c5ce"/><path d="M1065.34 907.0h0.93" stroke="#5fb3b3"/><path d="M1066.27 907.0h12.09" stroke="#99c794"/><path d="M1079.29 907.0h2.79" stroke="#c0c5ce"/><path d="M1069.06 909.0h0.93" stroke="#f97b58"/><path d="M1069.99 909.0h17.67" stroke="#f9ae58"/><path d="M1087.66 909.0h0.93" stroke="#c0c5ce"/><path d="M1069.06 911.0h0.93" stroke="#f97b58"/><path d="M1069.99 911.0h17.67" stroke="#f9ae58"/><path d="M1087.66 911.0h0.93" stroke="#c0c5ce"/><path d="M1069.06 913.0h0.93" stroke="#f97b58"/><path d="M1069.99 913.0h17.67" stroke="#f9ae58"/><path d="M1087.66 913.0h0.93" stroke="#c0c5ce"/><path d="M1065.34 915.0h0.93" stroke="#c0c5ce"/><path d="M1061.62 917.0h0.93" stroke="#5fb3b3"/><path d="M1062.55 917.0h10.23" stroke="#99c794"/><path d="M1073.71 917.0h2.79" stroke="#c0c5ce"/><path d="M1065.34 919.0h0.93" stroke="#5fb3b3"/><path d="M1066.27 919.0h15.81" stroke="#99c794"/><path d="M1083.01 919.0h2.79" stroke="#c0c5ce"/><path d="M1069.06 921.0h0.93" stroke="#f97b58"/><path d="M1069.99 921.0h16.74" stroke="#f9ae58"/><path d="M1086.73 921.0h0.93" stroke="#c0c5ce"/><path d="M1069.06 923.0h0.93" stroke="#f97b58"/><path d="M1069.99 923.0h17.67" stroke="#f9ae58"/><path d="M1087.66 923.0h0.93" stroke="#c0c5ce"/><path d="M1069.06 925.0h0.93" stroke="#f97b58"/><path d="M1069.99 925.0h16.74" stroke="#f9ae58"/><path d="M1086.73 925.0h0.93" stroke="#c0c5ce"/><path d="M1069.06 927.0h0.93" stroke="#f97b58"/><path d="M1069.99 927.0h15.81" stroke="#f9ae58"/><path d="M1085.80 927.0h0.93" stroke="#c0c5ce"/><path d="M1069.06 929.0h0.93" stroke="#f97b58"/><path d="M1069.99 929.0h17.67" stroke="#f9ae58"/><path d="M1087.66 929.0h0.93" stroke="#c0c5ce"/><path d="M1069.06 931.0h0.93" stroke="#f97b58"/><path d="M1069.99 931.0h16.74" stroke="#f9ae58"/><path d="M1086.73 931.0h0.93" stroke="#c0c5ce"/></g></svg>
<div id="sb"></div><div id="th"></div>
<div id="mmr"></div><div id="div"></div>
<div id="ex">
<div class="abs" style="left:0px;top:0px;width:1257px;height:61px;background:#202020"></div>
<div class="abs" style="left:0px;top:61px;width:1257px;height:1px;background:#2b2b2b"></div>
<div class="abs" style="left:262px;top:0px;width:1px;height:44px;background:#3a3a3a"></div>
<div class="abs" style="left:355px;top:0px;width:1px;height:34px;background:#3a3a3a"></div>
<div class="abs" style="left:453px;top:0px;width:1px;height:44px;background:#3a3a3a"></div>
<div class="abs" style="left:598px;top:0px;width:1px;height:44px;background:#3a3a3a"></div>
<div class="abs" style="left:731px;top:0px;width:1px;height:44px;background:#3a3a3a"></div>
<div class="abs" style="left:846px;top:0px;width:1px;height:44px;background:#3a3a3a"></div>
<div class="abs" style="left:262px;top:45px;width:1px;height:14px;background:#252525"></div>
<div class="abs" style="left:453px;top:45px;width:1px;height:14px;background:#252525"></div>
<div class="abs" style="left:598px;top:45px;width:1px;height:14px;background:#252525"></div>
<div class="abs" style="left:731px;top:45px;width:1px;height:14px;background:#252525"></div>
<div class="abs" style="left:846px;top:45px;width:1px;height:14px;background:#252525"></div>
<div class="abs" style="left:106px;top:67px;width:806px;height:30px;background:transparent;border:1px solid #4a4a4a"></div>
<div class="abs" style="left:881px;top:68px;width:1px;height:28px;background:#262626"></div>
<div class="abs" style="left:924px;top:67px;width:340px;height:30px;background:transparent;border:1px solid #4a4a4a"></div>
<div class="abs" style="left:287px;top:104px;width:970px;height:827px;background:#202020"></div>
<div class="abs" style="left:285px;top:104px;width:1px;height:827px;background:#151515"></div>
<div class="abs" style="left:286px;top:104px;width:2px;height:827px;background:#2a2a2a"></div>
<div class="abs" style="left:560px;top:105px;width:1px;height:24px;background:#3c3c3c"></div>
<div class="abs" style="left:704px;top:105px;width:1px;height:24px;background:#3c3c3c"></div>
<div class="abs" style="left:824px;top:105px;width:1px;height:24px;background:#3c3c3c"></div>
<div class="abs" style="left:904px;top:105px;width:1px;height:24px;background:#3c3c3c"></div>
<div class="abs" style="left:303px;top:157px;width:598px;height:20px;background:#777777"></div>
<div class="abs" style="left:1px;top:505px;width:283px;height:22px;background:#333333"></div>
</div>
<div class="t" style="left:1157.8px;top:10.9px;letter-spacing:-0.18px">Pin to Quick</div>
<div class="t" style="left:1173.0px;top:24.2px;letter-spacing:-0.46px;font-size:11px">access</div>
<div class="t" style="left:1229.6px;top:10.9px;letter-spacing:-0.40px">Copy</div>
<div class="t" style="left:1271.7px;top:11.1px;letter-spacing:-0.39px;font-size:11.5px">Paste</div>
<div class="t" style="left:1328.9px;top:-1.1px;letter-spacing:-0.20px">Copy path</div>
<div class="t" style="left:1328.9px;top:20.9px;letter-spacing:-0.26px">Paste shortcut</div>
<div class="t" style="left:1254.8px;top:43.9px;letter-spacing:0.02px;color:#bdbdbd">Clipboard</div>
<div class="t" style="left:1422.9px;top:10.9px;letter-spacing:-0.28px">Move</div>
<div class="t" style="left:1427.4px;top:23.9px;letter-spacing:0.25px">to</div>
<div class="t" style="left:1465.4px;top:10.9px;letter-spacing:-0.24px">Copy</div>
<div class="t" style="left:1469.4px;top:23.9px;letter-spacing:0.25px">to</div>
<div class="t" style="left:1512.6px;top:10.9px;letter-spacing:-0.22px">Delete</div>
<div class="t" style="left:1553.0px;top:11.1px;letter-spacing:-0.42px;font-size:11.5px">Rename</div>
<div class="t" style="left:1616.4px;top:10.9px;letter-spacing:-0.00px">New</div>
<div class="t" style="left:1612.4px;top:23.9px;letter-spacing:0.25px">folder</div>
<div class="t" style="left:1482.9px;top:43.9px;letter-spacing:-0.24px;color:#bdbdbd">Organize</div>
<div class="t" style="left:1671.8px;top:-0.8px;letter-spacing:-0.47px;font-size:11px">Easy access</div>
<div class="t" style="left:1754.8px;top:10.9px;letter-spacing:-0.29px">Properties</div>
<div class="t" style="left:1831.7px;top:-1.1px;letter-spacing:0.01px">Edit</div>
<div class="t" style="left:1831.7px;top:20.9px;letter-spacing:-0.07px">History</div>
<div class="t" style="left:1662.9px;top:43.9px;letter-spacing:-0.25px;color:#bdbdbd">New</div>
<div class="t" style="left:1798.6px;top:43.9px;letter-spacing:0.08px;color:#bdbdbd">Open</div>
<div class="t" style="left:1908.0px;top:-1.1px;letter-spacing:-0.30px">Select none</div>
<div class="t" style="left:1908.0px;top:20.9px;letter-spacing:-0.15px">Invert selection</div>
<div class="t" style="left:1922.9px;top:44.1px;letter-spacing:-0.30px;color:#bdbdbd;font-size:11.5px">Select</div>
<div class="t" style="left:1295.2px;top:74.3px;letter-spacing:-0.43px">This PC</div>
<div class="t" style="left:1357.4px;top:74.3px;letter-spacing:0.08px">Downloads</div>
<div class="t" style="left:1439.7px;top:74.3px;letter-spacing:-0.10px">DepthkitShareProject</div>
<div class="t" style="left:1573.7px;top:74.3px;letter-spacing:-0.10px">DepthkitShareProject</div>
<div class="t" style="left:2114.4px;top:73.9px;letter-spacing:-0.20px;color:#a8a8a8">Search DepthkitShareProject</div>
<div class="t" style="left:1456.0px;top:108.9px;letter-spacing:0.20px;color:#dedede">Name</div>
<div class="t" style="left:1716.6px;top:108.9px;letter-spacing:0.10px;color:#dedede">Date modified</div>
<div class="t" style="left:1860.8px;top:108.9px;letter-spacing:-0.41px;color:#dedede">Type</div>
<div class="t" style="left:1980.4px;top:109.1px;letter-spacing:-0.47px;color:#dedede;font-size:11.5px">Size</div>
<div class="t" style="left:1477.0px;top:138.2px;letter-spacing:-0.34px;font-size:11px">Test_TAKE11_18_08_54_46</div>
<div class="t" style="left:1716.6px;top:137.9px;letter-spacing:-0.24px">4/14/2022 7:03 PM</div>
<div class="t" style="left:1860.8px;top:137.9px;letter-spacing:-0.02px">File folder</div>
<div class="t" style="left:1477.0px;top:158.9px;letter-spacing:0.07px;color:#f4f4f4">dkproject.json</div>
<div class="t" style="left:1716.6px;top:158.9px;letter-spacing:-0.24px;color:#f0f0f0">4/14/2022 7:05 PM</div>
<div class="t" style="left:1860.8px;top:159.1px;letter-spacing:-0.38px;color:#f0f0f0;font-size:11.5px">JSON File</div>
<div class="t" style="left:2012.2px;top:159.2px;letter-spacing:-0.25px;color:#f0f0f0;font-size:11px">743 KB</div>
<div class="t" style="left:1194.9px;top:123.9px;letter-spacing:-0.25px">Quick access</div>
<div class="t" style="left:1202.9px;top:147.9px;letter-spacing:-0.17px">Desktop</div>
<div class="t" style="left:1202.9px;top:171.9px;letter-spacing:-0.01px">Downloads</div>
<div class="t" style="left:1202.9px;top:195.9px;letter-spacing:0.11px">Documents</div>
<div class="t" style="left:1202.9px;top:219.9px;letter-spacing:-0.06px">Pictures</div>
<div class="t" style="left:1202.9px;top:243.9px;letter-spacing:-0.41px">_Exports</div>
<div class="t" style="left:1202.9px;top:267.9px;letter-spacing:-0.41px">_Exports</div>
<div class="t" style="left:1202.9px;top:291.9px;letter-spacing:-0.16px">Exports</div>
<div class="t" style="left:1202.9px;top:315.9px;letter-spacing:-0.27px">Personal</div>
<div class="t" style="left:1194.9px;top:347.9px;letter-spacing:-0.17px">Creative Cloud Files</div>
<div class="t" style="left:1194.9px;top:379.9px;letter-spacing:-0.17px">OneDrive - Personal</div>
<div class="t" style="left:1194.9px;top:411.9px;letter-spacing:-0.50px">This PC</div>
<div class="t" style="left:1202.9px;top:435.9px;letter-spacing:-0.18px">3D Objects</div>
<div class="t" style="left:1202.9px;top:459.9px;letter-spacing:-0.09px">Desktop</div>
<div class="t" style="left:1202.9px;top:483.9px;letter-spacing:0.11px">Documents</div>
<div class="t" style="left:1202.9px;top:507.9px;letter-spacing:-0.01px">Downloads</div>
<div class="t" style="left:1202.9px;top:531.9px;letter-spacing:0.25px">Music</div>
<div class="t" style="left:1202.9px;top:555.9px;letter-spacing:-0.06px">Pictures</div>
<div class="t" style="left:1202.9px;top:579.9px;letter-spacing:-0.14px">Videos</div>
<div class="t" style="left:1202.9px;top:603.9px;letter-spacing:-0.04px">Windows (C:)</div>
<div class="t" style="left:1194.9px;top:635.9px;letter-spacing:0.25px">Network</div>
<svg id="icons" width="2407" height="931" style="position:absolute;left:0;top:0;overflow:hidden"><defs><linearGradient id="gdesk" x1="0" y1="0" x2="1" y2="1"><stop offset="0" stop-color="#3fb6ff"/><stop offset="1" stop-color="#0f8fe6"/></linearGradient><linearGradient id="gdl" x1="0" y1="0" x2="0" y2="1"><stop offset="0" stop-color="#3fa0ea"/><stop offset="1" stop-color="#2f8de0"/></linearGradient><linearGradient id="gpic" x1="0" y1="0" x2="0" y2="1"><stop offset="0" stop-color="#4f96cf"/><stop offset="0.4" stop-color="#a8cfe6"/><stop offset="0.5" stop-color="#3e7d5c"/><stop offset="0.75" stop-color="#7fb39b"/><stop offset="1" stop-color="#e2eef2"/></linearGradient><linearGradient id="gdrv" x1="0" y1="0" x2="0" y2="1"><stop offset="0" stop-color="#d9d9d9"/><stop offset="1" stop-color="#5a5a5a"/></linearGradient><linearGradient id="gmon" x1="0" y1="0" x2="1" y2="1"><stop offset="0" stop-color="#8fd4ff"/><stop offset="1" stop-color="#2a9cf0"/></linearGradient><radialGradient id="gglobe" cx="0.35" cy="0.35" r="0.7"><stop offset="0" stop-color="#bfe3f5"/><stop offset="1" stop-color="#3b86b8"/></radialGradient><linearGradient id="gfold" x1="0" y1="0" x2="0" y2="1"><stop offset="0" stop-color="#ffe596"/><stop offset="1" stop-color="#f4cd62"/></linearGradient></defs><polygon points="1184.80,125.40 1186.33,129.60 1190.79,129.75 1187.27,132.50 1188.50,136.80 1184.80,134.30 1181.10,136.80 1182.33,132.50 1178.81,129.75 1183.27,129.60" fill="#25a0f2"/><path d="M1177.6 131.2 l3.2 -1.2 M1176.6 133.4 l3.6 -1.3 M1175.8 135.6 l3.7 -1.3" stroke="#25a0f2" stroke-width="0.9"/><rect x="1182.0" y="150.0" width="16" height="12" fill="url(#gdesk)"/><rect x="1183.0" y="160.0" width="14" height="1" fill="#0a5fa8"/><rect x="1183.0" y="160.0" width="1" height="1" fill="#fff"/><rect x="1194.0" y="160.0" width="1" height="1" fill="#fff"/><rect x="1196.0" y="160.0" width="1" height="1" fill="#fff"/><path d="M1186.8 172.2 h6.5 v8.5 h5 l-8.25 7.5 l-8.25 -7.5 h5z" fill="url(#gdl)"/><path d="M1184.4 196.4 h8.5 l3.5 3.5 v12.3 h-12z" fill="#f7f7f7" stroke="#8f8f8f" stroke-width="0.8"/><path d="M1186.0 203.5 h8 M1186.0 205.7 h8 M1186.0 208.0 h3" stroke="#3f86d8" stroke-width="1"/><rect x="1190.0" y="207.5" width="4" height="2" fill="#2f7a4a"/><path d="M1186.0 201.5 l1.5 -3 l1.5 3 M1189.0 198.5 h3" stroke="#3f86d8" stroke-width="0.9" fill="none"/><rect x="1182.4" y="222.4" width="15.5" height="11.5" fill="#f2f2f2" stroke="#a8a8a8" stroke-width="0.8"/><rect x="1184.2" y="224.2" width="12" height="8" fill="url(#gpic)"/><rect x="1183.7" y="244.3" width="12" height="15.5" fill="#f8d775"/><rect x="1184.7" y="245.3" width="10" height="13.5" fill="#fbe08c" opacity="0.6"/><path d="M1194.5 252.8 h2.4 v7 h-2.4z" fill="#f3c851"/><rect x="1183.7" y="268.3" width="12" height="15.5" fill="#f8d775"/><rect x="1184.7" y="269.3" width="10" height="13.5" fill="#fbe08c" opacity="0.6"/><path d="M1194.5 276.8 h2.4 v7 h-2.4z" fill="#f3c851"/><rect x="1183.7" y="292.3" width="12" height="15.5" fill="#f8d775"/><rect x="1184.7" y="293.3" width="10" height="13.5" fill="#fbe08c" opacity="0.6"/><path d="M1194.5 300.8 h2.4 v7 h-2.4z" fill="#f3c851"/><rect x="1183.7" y="316.3" width="12" height="15.5" fill="#f8d775"/><rect x="1184.7" y="317.3" width="10" height="13.5" fill="#fbe08c" opacity="0.6"/><path d="M1194.5 324.8 h2.4 v7 h-2.4z" fill="#f3c851"/><rect x="1176.0" y="348.0" width="12.4" height="15.8" fill="#f8d775"/><circle cx="1183.6" cy="360.0" r="2.3" fill="none" stroke="#e0261c" stroke-width="1.3"/><circle cx="1186.6" cy="359.6" r="2.3" fill="none" stroke="#e0261c" stroke-width="1.3"/><path d="M1176.4 387.2 a5 5 0 0 1 9.2 -1.5 a4 4 0 0 1 6 3.5 a2.6 2.6 0 0 1 -1 5 h-12.6 a2.8 2.8 0 0 1 -1.6 -5.2 a1.8 1.8 0 0 1 0 -1.8z" fill="#0f78d4"/><path d="M1176.4 387.2 a5 5 0 0 1 9.2 -1.5 l-3 2.5z" fill="#0a5fb0"/><path d="M1176.2 390.1 l5.5 -3.5 l5.7 3.5 a2.4 2.4 0 0 1 -1 2.6 h-11.3 a2.4 2.4 0 0 1 -1 -2.6z" fill="#28a8ea"/><rect x="1174.0" y="413.0" width="16" height="10.5" fill="url(#gmon)" stroke="#2a8fd8" stroke-width="0.6"/><rect x="1180.5" y="424.0" width="3" height="3" fill="#d8d8d8"/><rect x="1174.0" y="426.6" width="16" height="1.6" fill="#d0d0d0"/><path d="M1190.0 436.0 l7.5 3.8 v8.4 l-7.5 3.8 l-7.5 -3.8 v-8.4z" fill="#28b4cf"/><path d="M1190.0 436.0 l7.5 3.8 l-7.5 3.8 l-7.5 -3.8z" fill="#8fe0ee"/><path d="M1190.0 443.6 l-7.5 -3.8 v8.4 l7.5 3.8z" fill="#c6f0f7"/><path d="M1190.0 443.6 l-7.5 -3.8 v3 l7.5 3.8z" fill="#e6fbff" opacity="0.5"/><rect x="1182.0" y="462.0" width="16" height="12" fill="url(#gdesk)"/><rect x="1183.0" y="472.0" width="14" height="1" fill="#0a5fa8"/><rect x="1183.0" y="472.0" width="1" height="1" fill="#fff"/><rect x="1194.0" y="472.0" width="1" height="1" fill="#fff"/><rect x="1196.0" y="472.0" width="1" height="1" fill="#fff"/><path d="M1184.4 484.4 h8.5 l3.5 3.5 v12.3 h-12z" fill="#f7f7f7" stroke="#8f8f8f" stroke-width="0.8"/><path d="M1186.0 491.5 h8 M1186.0 493.7 h8 M1186.0 496.0 h3" stroke="#3f86d8" stroke-width="1"/><rect x="1190.0" y="495.5" width="4" height="2" fill="#2f7a4a"/><path d="M1186.0 489.5 l1.5 -3 l1.5 3 M1189.0 486.5 h3" stroke="#3f86d8" stroke-width="0.9" fill="none"/><path d="M1186.8 508.0 h6.5 v8.5 h5 l-8.25 7.5 l-8.25 -7.5 h5z" fill="url(#gdl)"/><ellipse cx="1187.7" cy="545.3" rx="3.6" ry="2.9" fill="#1c9af0" transform="rotate(-20 1187.7 545.3)"/><rect x="1189.8" y="532.5" width="1.6" height="13" fill="#1c9af0"/><path d="M1190.6 532.5 c1 3 5 3.5 4.5 8.5 c-0.5 -3 -2 -4 -4.5 -4.5z" fill="#1c9af0"/><rect x="1182.4" y="558.4" width="15.5" height="11.5" fill="#f2f2f2" stroke="#a8a8a8" stroke-width="0.8"/><rect x="1184.2" y="560.2" width="12" height="8" fill="url(#gpic)"/><rect x="1183.0" y="581.0" width="13.8" height="15.2" fill="#3a3a3a" stroke="#6a6a6a" stroke-width="0.8"/><rect x="1184.0" y="582.0" width="1.2" height="1.4" fill="#9a9a9a"/><rect x="1194.6" y="582.0" width="1.2" height="1.4" fill="#9a9a9a"/><rect x="1184.0" y="585.0" width="1.2" height="1.4" fill="#9a9a9a"/><rect x="1194.6" y="585.0" width="1.2" height="1.4" fill="#9a9a9a"/><rect x="1184.0" y="588.0" width="1.2" height="1.4" fill="#9a9a9a"/><rect x="1194.6" y="588.0" width="1.2" height="1.4" fill="#9a9a9a"/><rect x="1184.0" y="591.0" width="1.2" height="1.4" fill="#9a9a9a"/><rect x="1194.6" y="591.0" width="1.2" height="1.4" fill="#9a9a9a"/><rect x="1184.0" y="594.0" width="1.2" height="1.4" fill="#9a9a9a"/><rect x="1194.6" y="594.0" width="1.2" height="1.4" fill="#9a9a9a"/><rect x="1186.0" y="582.2" width="8" height="6" fill="#2f6fd0"/><rect x="1186.0" y="589.0" width="8" height="6" fill="#2f6fd0"/><circle cx="1190.5" cy="585.0" r="1.8" fill="#f2c230"/><circle cx="1189.5" cy="592.0" r="1.8" fill="#f2c230"/><rect x="1186.5" y="585.0" width="2" height="2.5" fill="#d83a2a"/><rect x="1191.5" y="592.0" width="2" height="2.5" fill="#d83a2a"/><rect x="1182.5" y="612.0" width="15" height="7" rx="1" fill="url(#gdrv)"/><rect x="1182.5" y="612.0" width="15" height="2" fill="#f0f0f0" opacity="0.7"/><rect x="1192.5" y="615.8" width="2" height="1.5" fill="#3ad65a"/><rect x="1182.0" y="606.0" width="2.6" height="2.3" fill="#1ec8f0"/><rect x="1185.1" y="606.0" width="2.6" height="2.3" fill="#1ec8f0"/><rect x="1182.0" y="608.8" width="2.6" height="2.3" fill="#1ec8f0"/><rect x="1185.1" y="608.8" width="2.6" height="2.3" fill="#1ec8f0"/><circle cx="1184.5" cy="641.8" r="5.8" fill="url(#gglobe)"/><rect x="1174.0" y="643.2" width="11" height="7.5" fill="#6cc8f2" stroke="#3aa6e0" stroke-width="0.6"/><rect x="1178.5" y="650.7" width="2" height="2" fill="#d0d0d0"/><rect x="1176.0" y="651.3" width="7" height="1.2" fill="#d0d0d0"/><g transform="translate(1421.5 150.5) rotate(45 5 5)"><rect x="3" y="0" width="4" height="1.6" fill="#a9b2ba"/><rect x="3.6" y="1.4" width="2.8" height="3.5" fill="#a9b2ba"/><rect x="2" y="4.8" width="6" height="1.6" fill="#a9b2ba"/><rect x="4.5" y="6.2" width="1" height="4.5" fill="#a9b2ba"/></g><g transform="translate(1421.5 174.5) rotate(45 5 5)"><rect x="3" y="0" width="4" height="1.6" fill="#a9b2ba"/><rect x="3.6" y="1.4" width="2.8" height="3.5" fill="#a9b2ba"/><rect x="2" y="4.8" width="6" height="1.6" fill="#a9b2ba"/><rect x="4.5" y="6.2" width="1" height="4.5" fill="#a9b2ba"/></g><g transform="translate(1421.5 198.5) rotate(45 5 5)"><rect x="3" y="0" width="4" height="1.6" fill="#a9b2ba"/><rect x="3.6" y="1.4" width="2.8" height="3.5" fill="#a9b2ba"/><rect x="2" y="4.8" width="6" height="1.6" fill="#a9b2ba"/><rect x="4.5" y="6.2" width="1" height="4.5" fill="#a9b2ba"/></g><g transform="translate(1421.5 222.5) rotate(45 5 5)"><rect x="3" y="0" width="4" height="1.6" fill="#a9b2ba"/><rect x="3.6" y="1.4" width="2.8" height="3.5" fill="#a9b2ba"/><rect x="2" y="4.8" width="6" height="1.6" fill="#a9b2ba"/><rect x="4.5" y="6.2" width="1" height="4.5" fill="#a9b2ba"/></g><path d="M1179 3.2 l3.5 -3.5 M1186 1.5 l5 -3" stroke="#8a8a8a" stroke-width="1.5"/><rect x="1240.5" y="-3" width="15" height="9.5" fill="#f8f8f8" stroke="#9a9a9a" stroke-width="0.8"/><path d="M1242.5 1.5 h11 M1242.5 3.5 h11" stroke="#3b82f0" stroke-width="0.9"/><rect x="1276.5" y="-3" width="18.5" height="9" rx="1" fill="#5e5e5e"/><rect x="1277.8" y="-3" width="16" height="6.8" fill="#a8a8a8"/><rect x="1277.8" y="1.6" width="16" height="1" fill="#8a8a8a"/><rect x="1310" y="3" width="15.3" height="9" fill="#a9daf9" stroke="#7cc0ee" stroke-width="0.5"/><path d="M1312.2 5.2 l1.8 5.3 M1314.6 5.2 l1.8 5.3" stroke="#1a1a1a" stroke-width="1.3"/><rect x="1316.8" y="9" width="1.2" height="1.3" fill="#1a1a1a"/><rect x="1319" y="9" width="1.2" height="1.3" fill="#1a1a1a"/><rect x="1321.2" y="9" width="1.2" height="1.3" fill="#1a1a1a"/><rect x="1311" y="22" width="13" height="14.3" rx="1" fill="#5f5f5f"/><rect x="1312.3" y="23.3" width="10.4" height="11.7" fill="#a3a3a3"/><rect x="1315" y="21.3" width="5" height="2" fill="#7a7a7a"/><path d="M1315 31.5 v-2.5 a2 2 0 0 1 2 -2 h2.5 M1318.2 25.6 l1.8 1.4 l-1.8 1.4" stroke="#5a5a5a" stroke-width="1.2" fill="none"/><rect x="1426.7" y="-4" width="23.6" height="11.1" fill="url(#gfold)"/><path d="M1437 -1 L1444.6 7.6 L1445 2.8 L1453 2.6 L1453 -1z" fill="#3d9ae8"/><rect x="1469" y="-4" width="23.2" height="11" fill="url(#gfold)"/><rect x="1471" y="-4" width="0.8" height="11" fill="#fff1c0" opacity="0.7"/><rect x="1488.6" y="-4" width="1" height="11" fill="#e5b94a" opacity="0.8"/><path d="M1519 4 l5 -5.5 M1536 -1.5 l5 5.5" stroke="#e81123" stroke-width="3"/><path d="M1582 -2 v5 M1577.5 5.2 q4.5 -0.5 4.5 -2.5 q0 2 4.5 2.5" stroke="#767676" stroke-width="2" fill="none"/><path d="M1617.8 -4 h18.3 v8 h-13 l-1.5 4.5 l-3.8 -3.2z" fill="url(#gfold)"/><path d="M1656 -2 h9.5 l2.5 2.5 v14.3 h-12z" fill="#f4f6f8" stroke="#b0b0b0" stroke-width="0.7"/><path d="M1654.8 2.5 h5 M1654 4.5 h5 M1653.2 6.5 h5" stroke="#1476d2" stroke-width="0.9"/><rect x="1770.4" y="-4" width="20" height="10.5" fill="#f4f4f6" stroke="#a9a9a9" stroke-width="0.8"/><rect x="1778" y="-1" width="1" height="1.6" fill="#e08070"/><path d="M1815 -2 h10 l3.5 3.5 v13.5 h-13.5z" fill="#a6a6a6" stroke="#7a7a7a" stroke-width="0.6"/><path d="M1816.5 13.5 l11 -10" stroke="#6f6f6f" stroke-width="1.4"/><rect x="1813" y="21" width="11.2" height="14.2" fill="#f8d775" stroke="#d9b24f" stroke-width="0.5"/><path d="M1815 32.5 q0 -5 5 -5.5 l0 -1.5 l3 3 l-3 3 v-1.5 q-3 0 -5 2.5z" fill="#2fc23a"/><circle cx="1823.6" cy="31.4" r="5.2" fill="#e4e8ea" stroke="#9aa0a6" stroke-width="0.7"/><path d="M1821 31.8 l1.5 -1.5 l1.2 1.2 l2.2 -2.2" stroke="#555" stroke-width="0.6" fill="none"/><rect x="1890.0" y="-1.0" width="6.2" height="6.2" fill="#f2f2f2" stroke="#9a9a9a" stroke-width="0.6"/><rect x="1897.8" y="-1.0" width="6.2" height="6.2" fill="#f2f2f2" stroke="#9a9a9a" stroke-width="0.6"/><rect x="1890.0" y="7.8" width="6.2" height="6.2" fill="#f2f2f2" stroke="#9a9a9a" stroke-width="0.6"/><rect x="1897.8" y="7.8" width="6.2" height="6.2" fill="#f2f2f2" stroke="#9a9a9a" stroke-width="0.6"/><rect x="1890" y="21.8" width="6.2" height="6.2" fill="#f2f2f2" stroke="#9a9a9a" stroke-width="0.6"/><rect x="1897.6" y="29.9" width="6.2" height="6.2" fill="#f2f2f2" stroke="#9a9a9a" stroke-width="0.6"/><rect x="1897.5" y="21.4" width="7.5" height="7.5" fill="#bfe0fb" stroke="#38a0f0" stroke-width="1.2"/><rect x="1889.3" y="29.5" width="7.5" height="7.5" fill="#bfe0fb" stroke="#38a0f0" stroke-width="1.2"/><path d="M1442.0 30.0 h5.4 l-2.7 3z" fill="#e8e8e8"/><path d="M1484.0 30.0 h5.4 l-2.7 3z" fill="#e8e8e8"/><path d="M1527.0 30.0 h5.4 l-2.7 3z" fill="#e8e8e8"/><path d="M1778.0 30.0 h5.4 l-2.7 3z" fill="#e8e8e8"/><path d="M1733.0 5.2 h5.4 l-2.7 3z" fill="#e8e8e8"/><path d="M1175 82 h-11 M1169 76.8 l-5.2 5.2 l5.2 5.2" stroke="#ffffff" stroke-width="1.6" fill="none"/><path d="M1193.5 82 h11 M1199.5 76.8 l5.2 5.2 l-5.2 5.2" stroke="#7d7d7d" stroke-width="1.6" fill="none"/><path d="M1219.5 79.5 l3.4 3.6 l3.4 -3.6" stroke="#ffffff" stroke-width="1.5" fill="none"/><path d="M1243 89 v-11.5 M1237.6 82.6 l5.4 -5.4 l5.4 5.4" stroke="#ffffff" stroke-width="1.6" fill="none"/><rect x="1261.0" y="73.4" width="12" height="15.5" fill="#f8d775"/><rect x="1262.0" y="74.4" width="10" height="13.5" fill="#fbe08c" opacity="0.6"/><path d="M1271.8 81.9 h2.4 v7 h-2.4z" fill="#f3c851"/><path d="M1282.6 79.8 l2.9 2.9 l-2.9 2.9" stroke="#858585" stroke-width="1.7" fill="none"/><path d="M1344.6 79.8 l2.9 2.9 l-2.9 2.9" stroke="#858585" stroke-width="1.7" fill="none"/><path d="M1426.6 79.8 l2.9 2.9 l-2.9 2.9" stroke="#858585" stroke-width="1.7" fill="none"/><path d="M1560.6 79.8 l2.9 2.9 l-2.9 2.9" stroke="#858585" stroke-width="1.7" fill="none"/><path d="M2012.5 80.5 l4.6 4.6 l4.6 -4.6" stroke="#a0a0a0" stroke-width="1.5" fill="none"/><path d="M2049.8 79.5 a4.8 4.8 0 1 1 -5.5 -1.3" stroke="#9a9a9a" stroke-width="1.3" fill="none"/><path d="M2043 76.5 l3.2 1.8 l-2.2 3" stroke="#9a9a9a" stroke-width="1.3" fill="none"/><circle cx="2097.2" cy="79.6" r="3.9" stroke="#8f8f8f" stroke-width="1.2" fill="none"/><path d="M2094.4 82.5 l-5 5" stroke="#8f8f8f" stroke-width="1.4"/><path d="M1577 108.3 l3.7 -3.7 l3.7 3.7" stroke="#9a9a9a" stroke-width="1.1" fill="none"/><rect x="1459" y="137" width="12.2" height="15.8" fill="#f8d775"/><rect x="1460" y="138" width="10" height="14" fill="#fbe08c" opacity="0.6"/><path d="M1469.6 145.8 h2.4 v7 h-2.4z" fill="#f3c851"/><rect x="1462" y="161.5" width="5.2" height="7.6" fill="#efefef"/><path d="M1458.6 169.8 h9 M1461.2 168.4 v-7.6 a0.6 0.6 0 0 1 0.6 -0.6 h10.2 M1467.8 160.6 v9.2" stroke="#ffffff" stroke-width="4" fill="none" stroke-linecap="round"/><path d="M1458.6 169.8 h9 M1461.2 168.4 v-7.6 a0.6 0.6 0 0 1 0.6 -0.6 h10.2 M1467.8 160.6 v9.2" stroke="#262626" stroke-width="1.9" fill="none" stroke-linecap="round"/><rect x="1462.4" y="162" width="4.4" height="7" fill="#ececec"/></svg>
</body></html>
